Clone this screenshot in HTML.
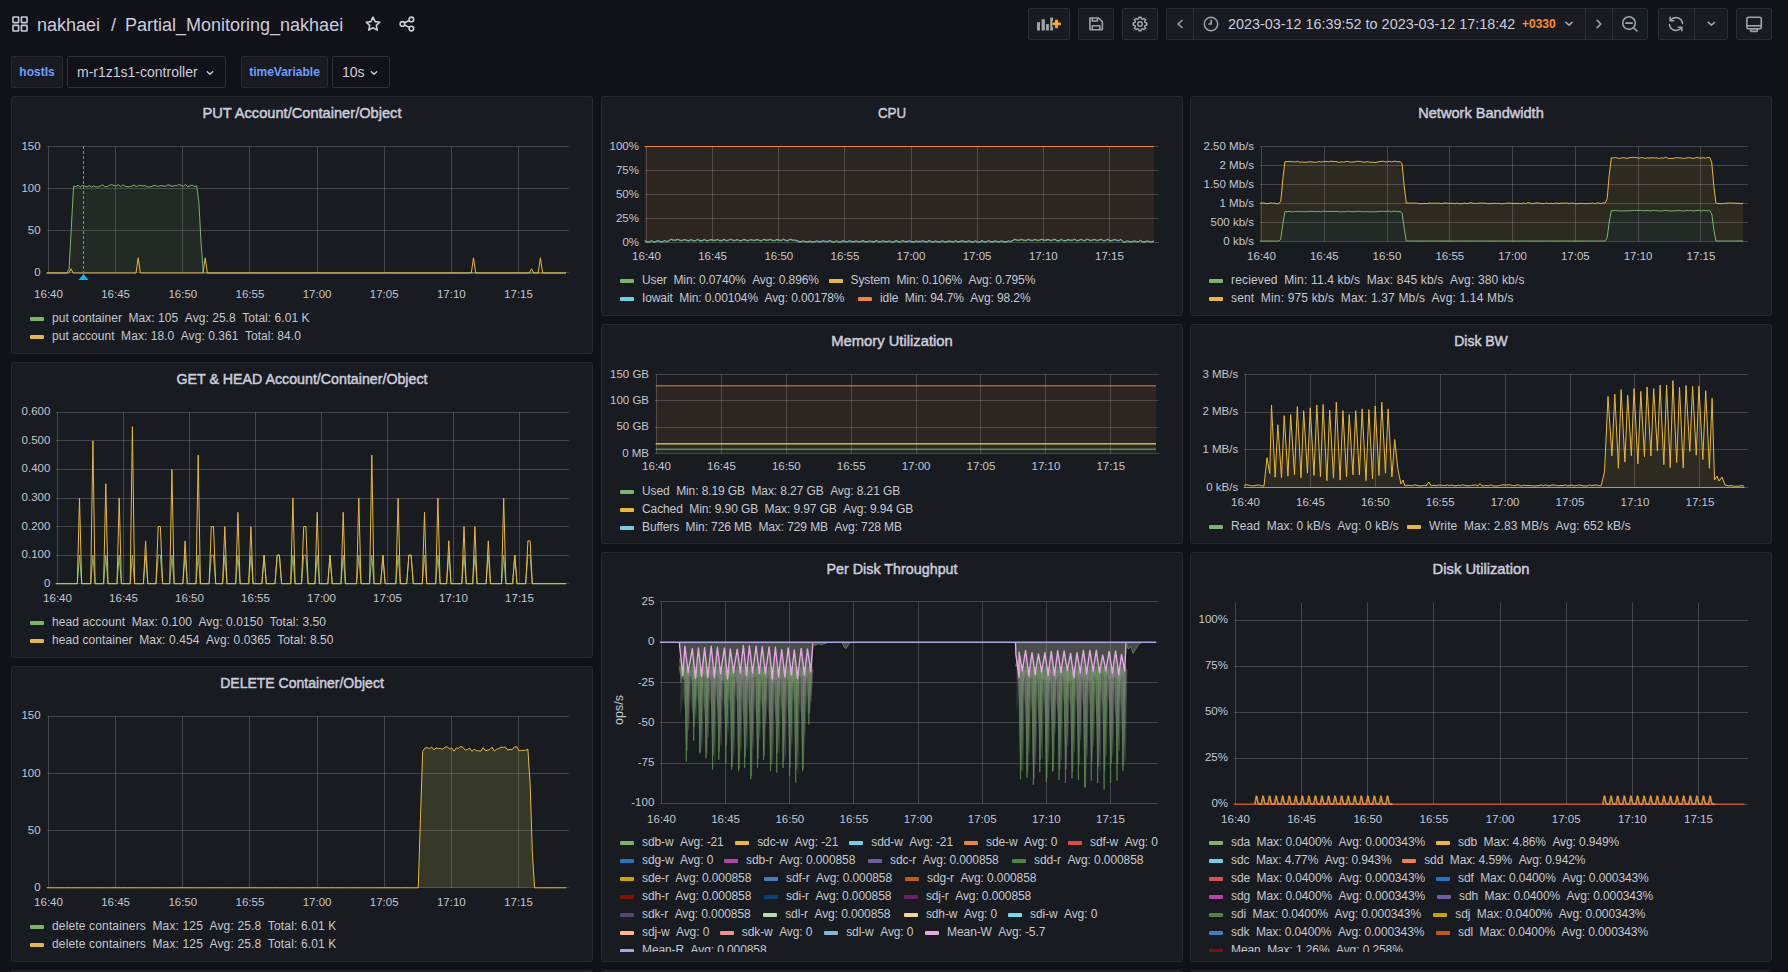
<!DOCTYPE html>
<html><head><meta charset="utf-8"><style>
*{box-sizing:border-box;margin:0;padding:0}
html,body{width:1788px;height:972px;overflow:hidden;background:#111217;font-family:"Liberation Sans",sans-serif;color:#ccccdc}
.panel{position:absolute;background:#181b1f;border:1px solid #26292e;border-radius:3px}
.clipfix{position:absolute;background:#181b1f}
.ptitle{position:absolute;text-align:center;font-size:15.4px;font-weight:400;-webkit-text-stroke:0.5px #ccccdc;line-height:18px;color:#ccccdc;white-space:nowrap}
.lrow{position:absolute;height:18px;line-height:18px;font-size:12px;white-space:nowrap;display:flex;align-items:center;color:#c7c8d0}
.li{display:inline-flex;align-items:center;margin-right:12px}
.li i{display:inline-block;width:14px;height:4px;border-radius:1px;margin-right:8px;position:relative;top:1px}
.lv{margin-right:6.5px}
.lv:last-child{margin-right:0}
.ic{position:absolute}
.crumb{position:absolute;font-size:18px;line-height:24px;color:#ccccdc;white-space:nowrap}
.btn{position:absolute;background:#181b1f;border:1px solid #2a2d33;border-radius:2px}
.btn svg{position:absolute;left:-1px;top:-1px}
.vdiv{position:absolute;width:1px;background:#2a2d33}
.ttxt{position:absolute;font-size:14.4px;line-height:32px;color:#ccccdc;white-space:nowrap}
.tz{position:absolute;font-size:12px;line-height:32px;color:#ff8c2e;font-weight:700;white-space:nowrap}
.vlab{position:absolute;height:32px;line-height:30px;background:#181b1f;border:1px solid #26292e;border-radius:2px;color:#6e9fff;font-size:12px;font-weight:700;text-align:center;white-space:nowrap}
.vsel{position:absolute;height:32px;line-height:30px;background:#111217;border:1px solid #2e3137;border-radius:2px;font-size:14px;white-space:nowrap}
svg.page{position:absolute;left:0;top:0}
.ax{font-family:"Liberation Sans",sans-serif;font-size:11.5px;fill:#c5c7cf}
</style></head><body>
<div class="panel" style="left:11px;top:96px;width:582px;height:258px"></div><div class="ptitle" style="left:11px;top:104px;width:582px;transform:scaleX(0.9506493506493506)">PUT Account/Container/Object</div><div class="lrow" style="left:30px;top:308.5px;letter-spacing:0.05px"><span class="li"><i style="background:#7EB26D"></i><span class="lv">put container</span><span class="lv">Max: 105</span><span class="lv">Avg: 25.8</span><span class="lv">Total: 6.01 K</span></span></div><div class="lrow" style="left:30px;top:326.5px;letter-spacing:0.05px"><span class="li"><i style="background:#EAB839"></i><span class="lv">put account</span><span class="lv">Max: 18.0</span><span class="lv">Avg: 0.361</span><span class="lv">Total: 84.0</span></span></div><div class="panel" style="left:11px;top:362px;width:582px;height:296px"></div><div class="ptitle" style="left:11px;top:370px;width:582px;transform:scaleX(0.9236363636363636)">GET &amp; HEAD Account/Container/Object</div><div class="lrow" style="left:30px;top:612.7px;letter-spacing:0.09px"><span class="li"><i style="background:#7EB26D"></i><span class="lv">head account</span><span class="lv">Max: 0.100</span><span class="lv">Avg: 0.0150</span><span class="lv">Total: 3.50</span></span></div><div class="lrow" style="left:30px;top:630.7px;letter-spacing:0.09px"><span class="li"><i style="background:#EAB839"></i><span class="lv">head container</span><span class="lv">Max: 0.454</span><span class="lv">Avg: 0.0365</span><span class="lv">Total: 8.50</span></span></div><div class="panel" style="left:11px;top:666px;width:582px;height:296px"></div><div class="ptitle" style="left:11px;top:674px;width:582px;transform:scaleX(0.9111688311688312)">DELETE Container/Object</div><div class="lrow" style="left:30px;top:917.0px;letter-spacing:0.15px"><span class="li"><i style="background:#7EB26D"></i><span class="lv">delete containers</span><span class="lv">Max: 125</span><span class="lv">Avg: 25.8</span><span class="lv">Total: 6.01 K</span></span></div><div class="lrow" style="left:30px;top:935.0px;letter-spacing:0.15px"><span class="li"><i style="background:#EAB839"></i><span class="lv">delete containers</span><span class="lv">Max: 125</span><span class="lv">Avg: 25.8</span><span class="lv">Total: 6.01 K</span></span></div><div class="panel" style="left:601px;top:96px;width:582px;height:220px"></div><div class="ptitle" style="left:601px;top:104px;width:582px;transform:scaleX(0.8675324675324675)">CPU</div><div class="lrow" style="left:620px;top:270.7px;letter-spacing:-0.1px"><span class="li"><i style="background:#7EB26D"></i><span class="lv">User</span><span class="lv">Min: 0.0740%</span><span class="lv">Avg: 0.896%</span></span></div><div class="lrow" style="left:828.5px;top:270.7px;letter-spacing:-0.1px"><span class="li"><i style="background:#EAB839"></i><span class="lv">System</span><span class="lv">Min: 0.106%</span><span class="lv">Avg: 0.795%</span></span></div><div class="lrow" style="left:620px;top:288.7px;letter-spacing:-0.1px"><span class="li"><i style="background:#6ED0E0"></i><span class="lv">Iowait</span><span class="lv">Min: 0.00104%</span><span class="lv">Avg: 0.00178%</span></span></div><div class="lrow" style="left:858px;top:288.7px;letter-spacing:-0.1px"><span class="li"><i style="background:#EF843C"></i><span class="lv">idle</span><span class="lv">Min: 94.7%</span><span class="lv">Avg: 98.2%</span></span></div><div class="panel" style="left:601px;top:324px;width:582px;height:220px"></div><div class="ptitle" style="left:601px;top:332px;width:582px;transform:scaleX(0.9600000000000001)">Memory Utilization</div><div class="lrow" style="left:620px;top:482.4px;letter-spacing:-0.1px"><span class="li"><i style="background:#7EB26D"></i><span class="lv">Used</span><span class="lv">Min: 8.19 GB</span><span class="lv">Max: 8.27 GB</span><span class="lv">Avg: 8.21 GB</span></span></div><div class="lrow" style="left:620px;top:500.4px;letter-spacing:-0.1px"><span class="li"><i style="background:#EAB839"></i><span class="lv">Cached</span><span class="lv">Min: 9.90 GB</span><span class="lv">Max: 9.97 GB</span><span class="lv">Avg: 9.94 GB</span></span></div><div class="lrow" style="left:620px;top:518.4px;letter-spacing:-0.1px"><span class="li"><i style="background:#6ED0E0"></i><span class="lv">Buffers</span><span class="lv">Min: 726 MB</span><span class="lv">Max: 729 MB</span><span class="lv">Avg: 728 MB</span></span></div><div class="panel" style="left:1190px;top:96px;width:582px;height:220px"></div><div class="ptitle" style="left:1190px;top:104px;width:582px;transform:scaleX(0.9464935064935065)">Network Bandwidth</div><div class="lrow" style="left:1209px;top:270.7px;letter-spacing:0.16px"><span class="li"><i style="background:#7EB26D"></i><span class="lv">recieved</span><span class="lv">Min: 11.4 kb/s</span><span class="lv">Max: 845 kb/s</span><span class="lv">Avg: 380 kb/s</span></span></div><div class="lrow" style="left:1209px;top:288.7px;letter-spacing:0.16px"><span class="li"><i style="background:#EAB839"></i><span class="lv">sent</span><span class="lv">Min: 975 kb/s</span><span class="lv">Max: 1.37 Mb/s</span><span class="lv">Avg: 1.14 Mb/s</span></span></div><div class="panel" style="left:1190px;top:324px;width:582px;height:220px"></div><div class="ptitle" style="left:1190px;top:332px;width:582px;transform:scaleX(0.9101298701298701)">Disk BW</div><div class="lrow" style="left:1209px;top:516.7px;letter-spacing:0.12px"><span class="li"><i style="background:#7EB26D"></i><span class="lv">Read</span><span class="lv">Max: 0 kB/s</span><span class="lv">Avg: 0 kB/s</span></span></div><div class="lrow" style="left:1407px;top:516.7px;letter-spacing:0.12px"><span class="li"><i style="background:#EAB839"></i><span class="lv">Write</span><span class="lv">Max: 2.83 MB/s</span><span class="lv">Avg: 652 kB/s</span></span></div><div class="panel" style="left:601px;top:552px;width:582px;height:410px"></div><div class="ptitle" style="left:601px;top:560px;width:582px;transform:scaleX(0.9309090909090909)">Per Disk Throughput</div><div class="lrow" style="left:620px;top:832.7px;letter-spacing:-0.1px"><span class="li"><i style="background:#7EB26D"></i><span class="lv">sdb-w</span><span class="lv">Avg: -21</span></span></div><div class="lrow" style="left:735.2px;top:832.7px;letter-spacing:-0.1px"><span class="li"><i style="background:#EAB839"></i><span class="lv">sdc-w</span><span class="lv">Avg: -21</span></span></div><div class="lrow" style="left:849.3px;top:832.7px;letter-spacing:-0.1px"><span class="li"><i style="background:#6ED0E0"></i><span class="lv">sdd-w</span><span class="lv">Avg: -21</span></span></div><div class="lrow" style="left:964px;top:832.7px;letter-spacing:-0.1px"><span class="li"><i style="background:#EF843C"></i><span class="lv">sde-w</span><span class="lv">Avg: 0</span></span></div><div class="lrow" style="left:1068px;top:832.7px;letter-spacing:-0.1px"><span class="li"><i style="background:#E24D42"></i><span class="lv">sdf-w</span><span class="lv">Avg: 0</span></span></div><div class="lrow" style="left:620px;top:850.7px;letter-spacing:-0.1px"><span class="li"><i style="background:#1F78C1"></i><span class="lv">sdg-w</span><span class="lv">Avg: 0</span></span></div><div class="lrow" style="left:724px;top:850.7px;letter-spacing:-0.1px"><span class="li"><i style="background:#BA43A9"></i><span class="lv">sdb-r</span><span class="lv">Avg: 0.000858</span></span></div><div class="lrow" style="left:868.1px;top:850.7px;letter-spacing:-0.1px"><span class="li"><i style="background:#705DA0"></i><span class="lv">sdc-r</span><span class="lv">Avg: 0.000858</span></span></div><div class="lrow" style="left:1012.1px;top:850.7px;letter-spacing:-0.1px"><span class="li"><i style="background:#508642"></i><span class="lv">sdd-r</span><span class="lv">Avg: 0.000858</span></span></div><div class="lrow" style="left:620px;top:868.7px;letter-spacing:-0.1px"><span class="li"><i style="background:#CCA300"></i><span class="lv">sde-r</span><span class="lv">Avg: 0.000858</span></span></div><div class="lrow" style="left:764.1px;top:868.7px;letter-spacing:-0.1px"><span class="li"><i style="background:#447EBC"></i><span class="lv">sdf-r</span><span class="lv">Avg: 0.000858</span></span></div><div class="lrow" style="left:905.1px;top:868.7px;letter-spacing:-0.1px"><span class="li"><i style="background:#C15C17"></i><span class="lv">sdg-r</span><span class="lv">Avg: 0.000858</span></span></div><div class="lrow" style="left:620px;top:886.7px;letter-spacing:-0.1px"><span class="li"><i style="background:#890F02"></i><span class="lv">sdh-r</span><span class="lv">Avg: 0.000858</span></span></div><div class="lrow" style="left:764.1px;top:886.7px;letter-spacing:-0.1px"><span class="li"><i style="background:#0A437C"></i><span class="lv">sdi-r</span><span class="lv">Avg: 0.000858</span></span></div><div class="lrow" style="left:903.9px;top:886.7px;letter-spacing:-0.1px"><span class="li"><i style="background:#6D1F62"></i><span class="lv">sdj-r</span><span class="lv">Avg: 0.000858</span></span></div><div class="lrow" style="left:620px;top:904.7px;letter-spacing:-0.1px"><span class="li"><i style="background:#584477"></i><span class="lv">sdk-r</span><span class="lv">Avg: 0.000858</span></span></div><div class="lrow" style="left:763.2px;top:904.7px;letter-spacing:-0.1px"><span class="li"><i style="background:#B7DBAB"></i><span class="lv">sdl-r</span><span class="lv">Avg: 0.000858</span></span></div><div class="lrow" style="left:903.9px;top:904.7px;letter-spacing:-0.1px"><span class="li"><i style="background:#F4D598"></i><span class="lv">sdh-w</span><span class="lv">Avg: 0</span></span></div><div class="lrow" style="left:1008px;top:904.7px;letter-spacing:-0.1px"><span class="li"><i style="background:#70DBED"></i><span class="lv">sdi-w</span><span class="lv">Avg: 0</span></span></div><div class="lrow" style="left:620px;top:922.7px;letter-spacing:-0.1px"><span class="li"><i style="background:#F9BA8F"></i><span class="lv">sdj-w</span><span class="lv">Avg: 0</span></span></div><div class="lrow" style="left:719.8px;top:922.7px;letter-spacing:-0.1px"><span class="li"><i style="background:#F29191"></i><span class="lv">sdk-w</span><span class="lv">Avg: 0</span></span></div><div class="lrow" style="left:824.2px;top:922.7px;letter-spacing:-0.1px"><span class="li"><i style="background:#82B5D8"></i><span class="lv">sdl-w</span><span class="lv">Avg: 0</span></span></div><div class="lrow" style="left:925.1px;top:922.7px;letter-spacing:-0.1px"><span class="li"><i style="background:#E5A8E2"></i><span class="lv">Mean-W</span><span class="lv">Avg: -5.7</span></span></div><div class="lrow" style="left:620px;top:940.7px;letter-spacing:-0.1px"><span class="li"><i style="background:#AEA2E0"></i><span class="lv">Mean-R</span><span class="lv">Avg: 0.000858</span></span></div><div class="panel" style="left:1190px;top:552px;width:582px;height:410px"></div><div class="ptitle" style="left:1190px;top:560px;width:582px;transform:scaleX(0.958961038961039)">Disk Utilization</div><div class="lrow" style="left:1209px;top:832.7px;letter-spacing:-0.1px"><span class="li"><i style="background:#7EB26D"></i><span class="lv">sda</span><span class="lv">Max: 0.0400%</span><span class="lv">Avg: 0.000343%</span></span></div><div class="lrow" style="left:1436px;top:832.7px;letter-spacing:-0.1px"><span class="li"><i style="background:#EAB839"></i><span class="lv">sdb</span><span class="lv">Max: 4.86%</span><span class="lv">Avg: 0.949%</span></span></div><div class="lrow" style="left:1209px;top:850.7px;letter-spacing:-0.1px"><span class="li"><i style="background:#6ED0E0"></i><span class="lv">sdc</span><span class="lv">Max: 4.77%</span><span class="lv">Avg: 0.943%</span></span></div><div class="lrow" style="left:1402.2px;top:850.7px;letter-spacing:-0.1px"><span class="li"><i style="background:#EF843C"></i><span class="lv">sdd</span><span class="lv">Max: 4.59%</span><span class="lv">Avg: 0.942%</span></span></div><div class="lrow" style="left:1209px;top:868.7px;letter-spacing:-0.1px"><span class="li"><i style="background:#E24D42"></i><span class="lv">sde</span><span class="lv">Max: 0.0400%</span><span class="lv">Avg: 0.000343%</span></span></div><div class="lrow" style="left:1436px;top:868.7px;letter-spacing:-0.1px"><span class="li"><i style="background:#1F78C1"></i><span class="lv">sdf</span><span class="lv">Max: 0.0400%</span><span class="lv">Avg: 0.000343%</span></span></div><div class="lrow" style="left:1209px;top:886.7px;letter-spacing:-0.1px"><span class="li"><i style="background:#BA43A9"></i><span class="lv">sdg</span><span class="lv">Max: 0.0400%</span><span class="lv">Avg: 0.000343%</span></span></div><div class="lrow" style="left:1437px;top:886.7px;letter-spacing:-0.1px"><span class="li"><i style="background:#705DA0"></i><span class="lv">sdh</span><span class="lv">Max: 0.0400%</span><span class="lv">Avg: 0.000343%</span></span></div><div class="lrow" style="left:1209px;top:904.7px;letter-spacing:-0.1px"><span class="li"><i style="background:#508642"></i><span class="lv">sdi</span><span class="lv">Max: 0.0400%</span><span class="lv">Avg: 0.000343%</span></span></div><div class="lrow" style="left:1433.3px;top:904.7px;letter-spacing:-0.1px"><span class="li"><i style="background:#CCA300"></i><span class="lv">sdj</span><span class="lv">Max: 0.0400%</span><span class="lv">Avg: 0.000343%</span></span></div><div class="lrow" style="left:1209px;top:922.7px;letter-spacing:-0.1px"><span class="li"><i style="background:#447EBC"></i><span class="lv">sdk</span><span class="lv">Max: 0.0400%</span><span class="lv">Avg: 0.000343%</span></span></div><div class="lrow" style="left:1436px;top:922.7px;letter-spacing:-0.1px"><span class="li"><i style="background:#C15C17"></i><span class="lv">sdl</span><span class="lv">Max: 0.0400%</span><span class="lv">Avg: 0.000343%</span></span></div><div class="lrow" style="left:1209px;top:940.7px;letter-spacing:-0.1px"><span class="li"><i style="background:#890F02"></i><span class="lv">Mean</span><span class="lv">Max: 1.26%</span><span class="lv">Avg: 0.258%</span></span></div><div class="clipfix" style="left:602px;top:952px;width:580px;height:9px"></div><div class="clipfix" style="left:1191px;top:952px;width:580px;height:9px"></div><div class="panel" style="left:11px;top:970px;width:582px;height:20px"></div><div class="panel" style="left:601px;top:970px;width:582px;height:20px"></div><div class="panel" style="left:1190px;top:970px;width:582px;height:20px"></div>
<svg class="ic" style="left:12px;top:16px" width="16" height="16" viewBox="0 0 16 16" fill="none" stroke="#ccccdc" stroke-width="1.6">
<rect x="1" y="1" width="5.6" height="5.6" rx="0.6"/><rect x="9.4" y="1" width="5.6" height="5.6" rx="0.6"/>
<rect x="1" y="9.4" width="5.6" height="5.6" rx="0.6"/><rect x="9.4" y="9.4" width="5.6" height="5.6" rx="0.6"/></svg>
<div class="crumb" style="left:37px;top:12.7px">nakhaei</div>
<div class="crumb" style="left:111px;top:12.7px">/</div>
<div class="crumb" style="left:125px;top:12.7px">Partial_Monitoring_nakhaei</div>
<svg class="ic" style="left:364px;top:15px" width="18" height="18" viewBox="0 0 18 18" fill="none" stroke="#ccccdc" stroke-width="1.6" stroke-linejoin="round">
<path d="M9 2.2 L11.1 6.6 L15.8 7.2 L12.3 10.4 L13.2 15.1 L9 12.8 L4.8 15.1 L5.7 10.4 L2.2 7.2 L6.9 6.6 Z"/></svg>
<svg class="ic" style="left:397px;top:15px" width="20" height="18" viewBox="0 0 20 18" fill="none" stroke="#ccccdc" stroke-width="1.6">
<circle cx="5.4" cy="8.9" r="2.3"/><circle cx="14.4" cy="4.4" r="2.3"/><circle cx="14.4" cy="13.6" r="2.3"/>
<path d="M7.6 7.8 L12.2 5.5 M7.6 10 L12.2 12.4"/></svg>
<div class="btn" style="left:1028px;top:8px;width:42px;height:32px;"><svg width="42" height="32" viewBox="0 0 42 32"><g fill="#9fa3ab">
<rect x="9" y="14.2" width="3" height="8.3"/><rect x="13.6" y="11.3" width="3.3" height="11.2"/><rect x="18" y="16.1" width="2.9" height="6.4"/><rect x="22.2" y="9.5" width="2.9" height="13"/></g>
<defs><linearGradient id="og" x1="0" y1="0" x2="0" y2="1"><stop offset="0" stop-color="#ffb92e"/><stop offset="1" stop-color="#ff9a1a"/></linearGradient></defs>
<path d="M24 15.9 H33 M28.5 11.6 V20.4" stroke="#1c1f24" stroke-width="5.2"/><path d="M24.2 15.9 H32.8 M28.5 11.8 V20.2" stroke="url(#og)" stroke-width="2.8"/></svg></div><div class="btn" style="left:1078px;top:8px;width:36px;height:32px;"><svg width="36" height="32" viewBox="0 0 36 32" fill="none" stroke="#9fa3ab" stroke-width="1.6" stroke-linejoin="round">
<path d="M11.9 10 H20.6 L24.4 13.8 V20.9 Q24.4 21.8 23.5 21.8 H12.8 Q11.9 21.8 11.9 20.9 Z"/><path d="M14.3 10 V13 H19.4 V10"/><path d="M14.3 21.8 V17.8 H21.8 V21.8"/></svg></div><div class="btn" style="left:1122px;top:8px;width:36px;height:32px;"><svg width="36" height="32" viewBox="0 0 36 32" fill="none" stroke="#9fa3ab" stroke-width="1.5" stroke-linejoin="round">
<polygon points="23.11,14.59 24.70,14.85 24.70,17.15 23.11,17.41 22.61,18.61 23.55,19.93 21.93,21.55 20.61,20.61 19.41,21.11 19.15,22.70 16.85,22.70 16.59,21.11 15.39,20.61 14.07,21.55 12.45,19.93 13.39,18.61 12.89,17.41 11.30,17.15 11.30,14.85 12.89,14.59 13.39,13.39 12.45,12.07 14.07,10.45 15.39,11.39 16.59,10.89 16.85,9.30 19.15,9.30 19.41,10.89 20.61,11.39 21.93,10.45 23.55,12.07 22.61,13.39"/><circle cx="18" cy="16" r="2.3"/></svg></div><div class="btn" style="left:1166px;top:8px;width:482px;height:32px"></div><div class="vdiv" style="left:1193px;top:9px;height:30px"></div><div class="vdiv" style="left:1585px;top:9px;height:30px"></div><div class="vdiv" style="left:1612px;top:9px;height:30px"></div><svg class="ic" style="left:1166px;top:8px" width="27" height="32" viewBox="0 0 27 32" fill="none" stroke="#9fa3ab" stroke-width="1.6" stroke-linecap="round" stroke-linejoin="round"><path d="M16 12.5 L12 16 L16 19.5"/></svg><svg class="ic" style="left:1200px;top:8px" width="22" height="32" viewBox="0 0 22 32" fill="none" stroke="#9fa3ab" stroke-width="1.5"><circle cx="11" cy="16" r="6.7"/><path d="M11.2 11.8 V16 H8.3" stroke-width="1.7"/></svg><div class="ttxt" style="left:1228px;top:8px">2023-03-12 16:39:52 to 2023-03-12 17:18:42</div><div class="tz" style="left:1522px;top:8px">+0330</div><svg class="ic" style="left:1560px;top:8px" width="18" height="32" viewBox="0 0 18 32" fill="none" stroke="#9fa3ab" stroke-width="1.6" stroke-linecap="round" stroke-linejoin="round"><path d="M5.9 14.4 L9 17.2 L12.1 14.4"/></svg><svg class="ic" style="left:1586px;top:8px" width="26" height="32" viewBox="0 0 26 32" fill="none" stroke="#9fa3ab" stroke-width="1.6" stroke-linecap="round" stroke-linejoin="round"><path d="M11.2 12.4 L14.8 16 L11.2 19.6"/></svg><svg class="ic" style="left:1613px;top:8px" width="34" height="32" viewBox="0 0 34 32" fill="none" stroke="#9fa3ab" stroke-width="1.6" stroke-linecap="round"><circle cx="16" cy="15.1" r="6.3"/><path d="M12.8 15.1 H19.2 M20.6 19.8 L24 23"/></svg><div class="btn" style="left:1658px;top:8px;width:70px;height:32px"></div><div class="vdiv" style="left:1694px;top:9px;height:30px"></div><svg class="ic" style="left:1658px;top:8px" width="36" height="32" viewBox="0 0 36 32" fill="none" stroke="#9fa3ab" stroke-width="1.6" stroke-linecap="round" stroke-linejoin="round">
<path d="M11.4 16.6 A6.8 6.8 0 0 0 23.6 19.6"/><path d="M24.6 15.4 A6.8 6.8 0 0 0 12.4 12.4"/><path d="M12.2 9.2 V12.8 H15.8" /><path d="M23.8 22.8 V19.2 H20.2"/></svg><svg class="ic" style="left:1695px;top:8px" width="33" height="32" viewBox="0 0 33 32" fill="none" stroke="#9fa3ab" stroke-width="1.6" stroke-linecap="round" stroke-linejoin="round"><path d="M13.3 14.3 L16.4 17.1 L19.5 14.3"/></svg><div class="btn" style="left:1736px;top:8px;width:36px;height:32px;"><svg width="36" height="32" viewBox="0 0 36 32" fill="none" stroke="#9fa3ab" stroke-width="1.6" stroke-linejoin="round">
<rect x="10.9" y="9.2" width="14.4" height="11.6" rx="1.6"/><path d="M10.9 17.8 H25.3"/><rect x="14.6" y="20.8" width="6.8" height="2.6" rx="0.8"/></svg></div><div class="vlab" style="left:11px;top:56px;width:52px">hostIs</div><div class="vsel" style="left:67px;top:56px;width:159px"><span style="margin-left:9px">m-r1z1s1-controller</span><svg style="position:absolute;left:137px;top:11px" width="10" height="10" viewBox="0 0 10 10" fill="none" stroke="#ccccdc" stroke-width="1.5" stroke-linecap="round" stroke-linejoin="round"><path d="M2.3 3.8 L5 6.3 L7.7 3.8"/></svg></div><div class="vlab" style="left:241px;top:56px;width:87px">timeVariable</div><div class="vsel" style="left:332px;top:56px;width:58px"><span style="margin-left:9px">10s</span><svg style="position:absolute;left:36px;top:11px" width="10" height="10" viewBox="0 0 10 10" fill="none" stroke="#ccccdc" stroke-width="1.5" stroke-linecap="round" stroke-linejoin="round"><path d="M2.3 3.8 L5 6.3 L7.7 3.8"/></svg></div>
<svg class="page" width="1788" height="972" viewBox="0 0 1788 972"><line x1="47.0" y1="272.5" x2="568.7" y2="272.5" stroke="rgba(204,206,220,0.245)" stroke-width="1"/><text x="40.6" y="276.0" class="ax" text-anchor="end">0</text><line x1="47.0" y1="230.5" x2="568.7" y2="230.5" stroke="rgba(204,206,220,0.245)" stroke-width="1"/><text x="40.6" y="233.8" class="ax" text-anchor="end">50</text><line x1="47.0" y1="188.5" x2="568.7" y2="188.5" stroke="rgba(204,206,220,0.245)" stroke-width="1"/><text x="40.6" y="191.7" class="ax" text-anchor="end">100</text><line x1="47.0" y1="146.5" x2="568.7" y2="146.5" stroke="rgba(204,206,220,0.245)" stroke-width="1"/><text x="40.6" y="149.5" class="ax" text-anchor="end">150</text><line x1="48.5" y1="146.5" x2="48.5" y2="273.0" stroke="rgba(204,206,220,0.245)" stroke-width="1"/><text x="48.5" y="297.8" class="ax" text-anchor="middle">16:40</text><line x1="115.5" y1="146.5" x2="115.5" y2="273.0" stroke="rgba(204,206,220,0.245)" stroke-width="1"/><text x="115.6" y="297.8" class="ax" text-anchor="middle">16:45</text><line x1="182.5" y1="146.5" x2="182.5" y2="273.0" stroke="rgba(204,206,220,0.245)" stroke-width="1"/><text x="182.8" y="297.8" class="ax" text-anchor="middle">16:50</text><line x1="249.5" y1="146.5" x2="249.5" y2="273.0" stroke="rgba(204,206,220,0.245)" stroke-width="1"/><text x="249.9" y="297.8" class="ax" text-anchor="middle">16:55</text><line x1="317.5" y1="146.5" x2="317.5" y2="273.0" stroke="rgba(204,206,220,0.245)" stroke-width="1"/><text x="317.1" y="297.8" class="ax" text-anchor="middle">17:00</text><line x1="384.5" y1="146.5" x2="384.5" y2="273.0" stroke="rgba(204,206,220,0.245)" stroke-width="1"/><text x="384.2" y="297.8" class="ax" text-anchor="middle">17:05</text><line x1="451.5" y1="146.5" x2="451.5" y2="273.0" stroke="rgba(204,206,220,0.245)" stroke-width="1"/><text x="451.3" y="297.8" class="ax" text-anchor="middle">17:10</text><line x1="518.5" y1="146.5" x2="518.5" y2="273.0" stroke="rgba(204,206,220,0.245)" stroke-width="1"/><text x="518.5" y="297.8" class="ax" text-anchor="middle">17:15</text><polygon points="46.71,273.00 48.95,273.00 51.19,273.00 53.42,273.00 55.66,273.00 57.90,273.00 60.14,273.00 62.38,273.00 64.61,273.00 66.85,273.00 69.09,268.84 71.33,227.28 73.57,186.19 75.80,186.66 78.04,185.31 80.28,186.87 82.52,185.62 84.76,186.08 86.99,186.91 89.23,185.69 91.47,186.96 93.71,185.89 95.95,186.88 98.18,186.82 100.42,185.92 102.66,184.83 104.90,186.73 107.14,186.46 109.37,185.37 111.61,184.51 113.85,185.51 116.09,185.99 118.33,184.43 120.56,186.94 122.80,184.75 125.04,186.28 127.28,186.68 129.52,186.75 131.75,186.23 133.99,184.86 136.23,186.58 138.47,185.49 140.71,185.34 142.94,186.06 145.18,185.59 147.42,186.89 149.66,186.90 151.90,186.51 154.13,185.23 156.37,185.91 158.61,186.22 160.85,185.48 163.09,185.84 165.32,186.26 167.56,184.92 169.80,185.18 172.04,186.41 174.28,185.51 176.51,185.65 178.75,184.70 180.99,185.10 183.23,186.29 185.47,184.42 187.70,186.75 189.94,185.94 192.18,185.02 194.42,186.65 196.66,185.74 198.89,202.34 201.13,243.91 203.37,273.00 205.61,273.00 207.85,273.00 210.08,273.00 212.32,273.00 214.56,273.00 216.80,273.00 219.04,273.00 221.27,273.00 223.51,273.00 225.75,273.00 227.99,273.00 230.23,273.00 232.46,273.00 234.70,273.00 236.94,273.00 239.18,273.00 241.42,273.00 243.65,273.00 245.89,273.00 248.13,273.00 250.37,273.00 252.61,273.00 254.84,273.00 257.08,273.00 259.32,273.00 261.56,273.00 263.80,273.00 266.03,273.00 268.27,273.00 270.51,273.00 272.75,273.00 274.99,273.00 277.22,273.00 279.46,273.00 281.70,273.00 283.94,273.00 286.18,273.00 288.41,273.00 290.65,273.00 292.89,273.00 295.13,273.00 297.37,273.00 299.60,273.00 301.84,273.00 304.08,273.00 306.32,273.00 308.56,273.00 310.79,273.00 313.03,273.00 315.27,273.00 317.51,273.00 319.75,273.00 321.98,273.00 324.22,273.00 326.46,273.00 328.70,273.00 330.94,273.00 333.17,273.00 335.41,273.00 337.65,273.00 339.89,273.00 342.13,273.00 344.36,273.00 346.60,273.00 348.84,273.00 351.08,273.00 353.32,273.00 355.55,273.00 357.79,273.00 360.03,273.00 362.27,273.00 364.51,273.00 366.74,273.00 368.98,273.00 371.22,273.00 373.46,273.00 375.70,273.00 377.93,273.00 380.17,273.00 382.41,273.00 384.65,273.00 386.89,273.00 389.12,273.00 391.36,273.00 393.60,273.00 395.84,273.00 398.08,273.00 400.31,273.00 402.55,273.00 404.79,273.00 407.03,273.00 409.27,273.00 411.50,273.00 413.74,273.00 415.98,273.00 418.22,273.00 420.46,273.00 422.69,273.00 424.93,273.00 427.17,273.00 429.41,273.00 431.65,273.00 433.88,273.00 436.12,273.00 438.36,273.00 440.60,273.00 442.84,273.00 445.07,273.00 447.31,273.00 449.55,273.00 451.79,273.00 454.03,273.00 456.26,273.00 458.50,273.00 460.74,273.00 462.98,273.00 465.22,273.00 467.45,273.00 469.69,273.00 471.93,273.00 474.17,273.00 476.41,273.00 478.64,273.00 480.88,273.00 483.12,273.00 485.36,273.00 487.60,273.00 489.83,273.00 492.07,273.00 494.31,273.00 496.55,273.00 498.79,273.00 501.02,273.00 503.26,273.00 505.50,273.00 507.74,273.00 509.98,273.00 512.21,273.00 514.45,273.00 516.69,273.00 518.93,273.00 521.17,273.00 523.40,273.00 525.64,273.00 527.88,273.00 530.12,273.00 532.36,273.00 534.59,273.00 536.83,273.00 539.07,273.00 541.31,273.00 543.55,273.00 545.78,273.00 548.02,273.00 550.26,273.00 552.50,273.00 554.74,273.00 556.97,273.00 559.21,273.00 561.45,273.00 563.69,273.00 565.93,273.00 565.93,273.00 46.71,273.00" fill="#7EB26D" fill-opacity="0.1" stroke="none"/><polyline points="46.71,273.00 48.95,273.00 51.19,273.00 53.42,273.00 55.66,273.00 57.90,273.00 60.14,273.00 62.38,273.00 64.61,273.00 66.85,273.00 69.09,268.84 71.33,227.28 73.57,186.19 75.80,186.66 78.04,185.31 80.28,186.87 82.52,185.62 84.76,186.08 86.99,186.91 89.23,185.69 91.47,186.96 93.71,185.89 95.95,186.88 98.18,186.82 100.42,185.92 102.66,184.83 104.90,186.73 107.14,186.46 109.37,185.37 111.61,184.51 113.85,185.51 116.09,185.99 118.33,184.43 120.56,186.94 122.80,184.75 125.04,186.28 127.28,186.68 129.52,186.75 131.75,186.23 133.99,184.86 136.23,186.58 138.47,185.49 140.71,185.34 142.94,186.06 145.18,185.59 147.42,186.89 149.66,186.90 151.90,186.51 154.13,185.23 156.37,185.91 158.61,186.22 160.85,185.48 163.09,185.84 165.32,186.26 167.56,184.92 169.80,185.18 172.04,186.41 174.28,185.51 176.51,185.65 178.75,184.70 180.99,185.10 183.23,186.29 185.47,184.42 187.70,186.75 189.94,185.94 192.18,185.02 194.42,186.65 196.66,185.74 198.89,202.34 201.13,243.91 203.37,273.00 205.61,273.00 207.85,273.00 210.08,273.00 212.32,273.00 214.56,273.00 216.80,273.00 219.04,273.00 221.27,273.00 223.51,273.00 225.75,273.00 227.99,273.00 230.23,273.00 232.46,273.00 234.70,273.00 236.94,273.00 239.18,273.00 241.42,273.00 243.65,273.00 245.89,273.00 248.13,273.00 250.37,273.00 252.61,273.00 254.84,273.00 257.08,273.00 259.32,273.00 261.56,273.00 263.80,273.00 266.03,273.00 268.27,273.00 270.51,273.00 272.75,273.00 274.99,273.00 277.22,273.00 279.46,273.00 281.70,273.00 283.94,273.00 286.18,273.00 288.41,273.00 290.65,273.00 292.89,273.00 295.13,273.00 297.37,273.00 299.60,273.00 301.84,273.00 304.08,273.00 306.32,273.00 308.56,273.00 310.79,273.00 313.03,273.00 315.27,273.00 317.51,273.00 319.75,273.00 321.98,273.00 324.22,273.00 326.46,273.00 328.70,273.00 330.94,273.00 333.17,273.00 335.41,273.00 337.65,273.00 339.89,273.00 342.13,273.00 344.36,273.00 346.60,273.00 348.84,273.00 351.08,273.00 353.32,273.00 355.55,273.00 357.79,273.00 360.03,273.00 362.27,273.00 364.51,273.00 366.74,273.00 368.98,273.00 371.22,273.00 373.46,273.00 375.70,273.00 377.93,273.00 380.17,273.00 382.41,273.00 384.65,273.00 386.89,273.00 389.12,273.00 391.36,273.00 393.60,273.00 395.84,273.00 398.08,273.00 400.31,273.00 402.55,273.00 404.79,273.00 407.03,273.00 409.27,273.00 411.50,273.00 413.74,273.00 415.98,273.00 418.22,273.00 420.46,273.00 422.69,273.00 424.93,273.00 427.17,273.00 429.41,273.00 431.65,273.00 433.88,273.00 436.12,273.00 438.36,273.00 440.60,273.00 442.84,273.00 445.07,273.00 447.31,273.00 449.55,273.00 451.79,273.00 454.03,273.00 456.26,273.00 458.50,273.00 460.74,273.00 462.98,273.00 465.22,273.00 467.45,273.00 469.69,273.00 471.93,273.00 474.17,273.00 476.41,273.00 478.64,273.00 480.88,273.00 483.12,273.00 485.36,273.00 487.60,273.00 489.83,273.00 492.07,273.00 494.31,273.00 496.55,273.00 498.79,273.00 501.02,273.00 503.26,273.00 505.50,273.00 507.74,273.00 509.98,273.00 512.21,273.00 514.45,273.00 516.69,273.00 518.93,273.00 521.17,273.00 523.40,273.00 525.64,273.00 527.88,273.00 530.12,273.00 532.36,273.00 534.59,273.00 536.83,273.00 539.07,273.00 541.31,273.00 543.55,273.00 545.78,273.00 548.02,273.00 550.26,273.00 552.50,273.00 554.74,273.00 556.97,273.00 559.21,273.00 561.45,273.00 563.69,273.00 565.93,273.00" fill="none" stroke="#7EB26D" stroke-width="1" stroke-opacity="1" stroke-linejoin="round"/><polyline points="46.71,273.00 68.80,273.00 71.00,268.78 73.20,273.00 136.00,273.00 138.20,257.82 140.40,273.00 203.00,273.00 205.20,257.82 207.40,273.00 471.30,273.00 473.50,257.82 475.70,273.00 529.30,273.00 531.50,268.78 533.70,273.00 538.20,273.00 540.40,257.82 542.60,273.00 566.00,273.00" fill="none" stroke="#EAB839" stroke-width="1" stroke-opacity="1" stroke-linejoin="round"/><line x1="83.5" y1="146" x2="83.5" y2="274" stroke="#14b8e6" stroke-width="1" stroke-dasharray="3,2"/><polygon points="78.5,280 83.5,274 88.5,280" fill="#14b8e6"/><line x1="56.0" y1="583.5" x2="568.8" y2="583.5" stroke="rgba(204,206,220,0.245)" stroke-width="1"/><text x="50.4" y="586.7" class="ax" text-anchor="end">0</text><line x1="56.0" y1="555.5" x2="568.8" y2="555.5" stroke="rgba(204,206,220,0.245)" stroke-width="1"/><text x="50.4" y="558.1" class="ax" text-anchor="end">0.100</text><line x1="56.0" y1="526.5" x2="568.8" y2="526.5" stroke="rgba(204,206,220,0.245)" stroke-width="1"/><text x="50.4" y="529.6" class="ax" text-anchor="end">0.200</text><line x1="56.0" y1="498.5" x2="568.8" y2="498.5" stroke="rgba(204,206,220,0.245)" stroke-width="1"/><text x="50.4" y="501.0" class="ax" text-anchor="end">0.300</text><line x1="56.0" y1="469.5" x2="568.8" y2="469.5" stroke="rgba(204,206,220,0.245)" stroke-width="1"/><text x="50.4" y="472.4" class="ax" text-anchor="end">0.400</text><line x1="56.0" y1="440.5" x2="568.8" y2="440.5" stroke="rgba(204,206,220,0.245)" stroke-width="1"/><text x="50.4" y="443.9" class="ax" text-anchor="end">0.500</text><line x1="56.0" y1="412.5" x2="568.8" y2="412.5" stroke="rgba(204,206,220,0.245)" stroke-width="1"/><text x="50.4" y="415.3" class="ax" text-anchor="end">0.600</text><line x1="57.5" y1="412.3" x2="57.5" y2="583.7" stroke="rgba(204,206,220,0.245)" stroke-width="1"/><text x="57.5" y="601.8" class="ax" text-anchor="middle">16:40</text><line x1="123.5" y1="412.3" x2="123.5" y2="583.7" stroke="rgba(204,206,220,0.245)" stroke-width="1"/><text x="123.5" y="601.8" class="ax" text-anchor="middle">16:45</text><line x1="189.5" y1="412.3" x2="189.5" y2="583.7" stroke="rgba(204,206,220,0.245)" stroke-width="1"/><text x="189.5" y="601.8" class="ax" text-anchor="middle">16:50</text><line x1="255.5" y1="412.3" x2="255.5" y2="583.7" stroke="rgba(204,206,220,0.245)" stroke-width="1"/><text x="255.5" y="601.8" class="ax" text-anchor="middle">16:55</text><line x1="321.5" y1="412.3" x2="321.5" y2="583.7" stroke="rgba(204,206,220,0.245)" stroke-width="1"/><text x="321.5" y="601.8" class="ax" text-anchor="middle">17:00</text><line x1="387.5" y1="412.3" x2="387.5" y2="583.7" stroke="rgba(204,206,220,0.245)" stroke-width="1"/><text x="387.5" y="601.8" class="ax" text-anchor="middle">17:05</text><line x1="453.5" y1="412.3" x2="453.5" y2="583.7" stroke="rgba(204,206,220,0.245)" stroke-width="1"/><text x="453.5" y="601.8" class="ax" text-anchor="middle">17:10</text><line x1="519.5" y1="412.3" x2="519.5" y2="583.7" stroke="rgba(204,206,220,0.245)" stroke-width="1"/><text x="519.5" y="601.8" class="ax" text-anchor="middle">17:15</text><polyline points="55.74,583.70 77.30,583.70 79.50,555.13 81.70,583.70 90.70,583.70 92.90,555.13 95.10,583.70 103.60,583.70 105.80,555.13 108.00,583.70 117.00,583.70 119.20,555.13 121.40,583.70 130.20,583.70 132.40,555.13 134.60,583.70 143.40,583.70 145.60,555.13 147.80,583.70 156.00,583.70 158.20,555.13 160.40,555.13 162.60,583.70 169.70,583.70 171.90,555.13 174.10,583.70 182.90,583.70 185.10,555.13 187.30,583.70 196.00,583.70 198.20,555.13 200.40,583.70 209.10,583.70 211.30,555.13 213.50,555.13 215.70,583.70 222.60,583.70 224.80,555.13 227.00,583.70 235.70,583.70 237.90,555.13 240.10,583.70 248.70,583.70 250.90,555.13 253.10,583.70 261.90,583.70 264.10,555.13 266.30,583.70 275.00,583.70 277.20,555.13 279.40,555.13 281.60,583.70 290.70,583.70 292.90,555.13 295.10,583.70 301.50,583.70 303.70,555.13 305.90,555.13 308.10,583.70 315.00,583.70 317.20,555.13 319.40,583.70 327.80,583.70 330.00,555.13 332.20,583.70 341.00,583.70 343.20,555.13 345.40,583.70 356.60,583.70 358.80,555.13 361.00,583.70 369.60,583.70 371.80,555.13 374.00,583.70 380.70,583.70 382.90,555.13 385.10,583.70 395.90,583.70 398.10,555.13 400.30,583.70 406.70,583.70 408.90,555.13 411.10,555.13 413.30,583.70 422.30,583.70 424.50,555.13 426.70,583.70 435.70,583.70 437.90,555.13 440.10,583.70 446.60,583.70 448.80,555.13 451.00,583.70 461.80,583.70 464.00,555.13 466.20,583.70 472.70,583.70 474.90,555.13 477.10,583.70 486.10,583.70 488.30,555.13 490.50,583.70 501.50,583.70 503.70,555.13 505.90,583.70 512.60,583.70 514.80,555.13 517.00,583.70 525.70,583.70 527.90,555.13 530.10,555.13 532.30,583.70 566.00,583.70" fill="none" stroke="#7EB26D" stroke-width="1" stroke-opacity="1" stroke-linejoin="round"/><polyline points="55.74,583.70 77.30,583.70 79.50,498.00 81.70,583.70 90.70,583.70 92.90,440.87 95.10,583.70 103.60,583.70 105.80,483.72 108.00,583.70 117.00,583.70 119.20,498.00 121.40,583.70 130.20,583.70 132.40,426.58 134.60,583.70 143.40,583.70 145.60,540.85 147.80,583.70 156.00,583.70 158.20,526.57 160.40,526.57 162.60,583.70 169.70,583.70 171.90,469.43 174.10,583.70 182.90,583.70 185.10,540.85 187.30,583.70 196.00,583.70 198.20,455.15 200.40,583.70 209.10,583.70 211.30,526.57 213.50,526.57 215.70,583.70 222.60,583.70 224.80,526.57 227.00,583.70 235.70,583.70 237.90,512.28 240.10,583.70 248.70,583.70 250.90,526.57 253.10,583.70 261.90,583.70 264.10,555.13 266.30,583.70 275.00,583.70 277.20,555.13 279.40,555.13 281.60,583.70 290.70,583.70 292.90,498.00 295.10,583.70 301.50,583.70 303.70,526.57 305.90,526.57 308.10,583.70 315.00,583.70 317.20,512.28 319.40,583.70 327.80,583.70 330.00,555.13 332.20,583.70 341.00,583.70 343.20,512.28 345.40,583.70 356.60,583.70 358.80,498.00 361.00,583.70 369.60,583.70 371.80,455.15 374.00,583.70 380.70,583.70 382.90,555.13 385.10,583.70 395.90,583.70 398.10,498.00 400.30,583.70 406.70,583.70 408.90,555.13 411.10,555.13 413.30,583.70 422.30,583.70 424.50,512.28 426.70,583.70 435.70,583.70 437.90,498.00 440.10,583.70 446.60,583.70 448.80,540.85 451.00,583.70 461.80,583.70 464.00,526.57 466.20,583.70 472.70,583.70 474.90,526.57 477.10,583.70 486.10,583.70 488.30,540.85 490.50,583.70 501.50,583.70 503.70,498.00 505.90,583.70 512.60,583.70 514.80,555.13 517.00,583.70 525.70,583.70 527.90,540.85 530.10,540.85 532.30,583.70 566.00,583.70" fill="none" stroke="#EAB839" stroke-width="1" stroke-opacity="1" stroke-linejoin="round"/><line x1="47.0" y1="887.5" x2="568.7" y2="887.5" stroke="rgba(204,206,220,0.245)" stroke-width="1"/><text x="40.6" y="890.8" class="ax" text-anchor="end">0</text><line x1="47.0" y1="830.5" x2="568.7" y2="830.5" stroke="rgba(204,206,220,0.245)" stroke-width="1"/><text x="40.6" y="833.7" class="ax" text-anchor="end">50</text><line x1="47.0" y1="773.5" x2="568.7" y2="773.5" stroke="rgba(204,206,220,0.245)" stroke-width="1"/><text x="40.6" y="776.5" class="ax" text-anchor="end">100</text><line x1="47.0" y1="716.5" x2="568.7" y2="716.5" stroke="rgba(204,206,220,0.245)" stroke-width="1"/><text x="40.6" y="719.4" class="ax" text-anchor="end">150</text><line x1="48.5" y1="716.4" x2="48.5" y2="887.8" stroke="rgba(204,206,220,0.245)" stroke-width="1"/><text x="48.5" y="905.8" class="ax" text-anchor="middle">16:40</text><line x1="115.5" y1="716.4" x2="115.5" y2="887.8" stroke="rgba(204,206,220,0.245)" stroke-width="1"/><text x="115.6" y="905.8" class="ax" text-anchor="middle">16:45</text><line x1="182.5" y1="716.4" x2="182.5" y2="887.8" stroke="rgba(204,206,220,0.245)" stroke-width="1"/><text x="182.8" y="905.8" class="ax" text-anchor="middle">16:50</text><line x1="249.5" y1="716.4" x2="249.5" y2="887.8" stroke="rgba(204,206,220,0.245)" stroke-width="1"/><text x="249.9" y="905.8" class="ax" text-anchor="middle">16:55</text><line x1="317.5" y1="716.4" x2="317.5" y2="887.8" stroke="rgba(204,206,220,0.245)" stroke-width="1"/><text x="317.1" y="905.8" class="ax" text-anchor="middle">17:00</text><line x1="384.5" y1="716.4" x2="384.5" y2="887.8" stroke="rgba(204,206,220,0.245)" stroke-width="1"/><text x="384.2" y="905.8" class="ax" text-anchor="middle">17:05</text><line x1="451.5" y1="716.4" x2="451.5" y2="887.8" stroke="rgba(204,206,220,0.245)" stroke-width="1"/><text x="451.3" y="905.8" class="ax" text-anchor="middle">17:10</text><line x1="518.5" y1="716.4" x2="518.5" y2="887.8" stroke="rgba(204,206,220,0.245)" stroke-width="1"/><text x="518.5" y="905.8" class="ax" text-anchor="middle">17:15</text><polygon points="46.71,887.80 48.95,887.80 51.19,887.80 53.42,887.80 55.66,887.80 57.90,887.80 60.14,887.80 62.38,887.80 64.61,887.80 66.85,887.80 69.09,887.80 71.33,887.80 73.57,887.80 75.80,887.80 78.04,887.80 80.28,887.80 82.52,887.80 84.76,887.80 86.99,887.80 89.23,887.80 91.47,887.80 93.71,887.80 95.95,887.80 98.18,887.80 100.42,887.80 102.66,887.80 104.90,887.80 107.14,887.80 109.37,887.80 111.61,887.80 113.85,887.80 116.09,887.80 118.33,887.80 120.56,887.80 122.80,887.80 125.04,887.80 127.28,887.80 129.52,887.80 131.75,887.80 133.99,887.80 136.23,887.80 138.47,887.80 140.71,887.80 142.94,887.80 145.18,887.80 147.42,887.80 149.66,887.80 151.90,887.80 154.13,887.80 156.37,887.80 158.61,887.80 160.85,887.80 163.09,887.80 165.32,887.80 167.56,887.80 169.80,887.80 172.04,887.80 174.28,887.80 176.51,887.80 178.75,887.80 180.99,887.80 183.23,887.80 185.47,887.80 187.70,887.80 189.94,887.80 192.18,887.80 194.42,887.80 196.66,887.80 198.89,887.80 201.13,887.80 203.37,887.80 205.61,887.80 207.85,887.80 210.08,887.80 212.32,887.80 214.56,887.80 216.80,887.80 219.04,887.80 221.27,887.80 223.51,887.80 225.75,887.80 227.99,887.80 230.23,887.80 232.46,887.80 234.70,887.80 236.94,887.80 239.18,887.80 241.42,887.80 243.65,887.80 245.89,887.80 248.13,887.80 250.37,887.80 252.61,887.80 254.84,887.80 257.08,887.80 259.32,887.80 261.56,887.80 263.80,887.80 266.03,887.80 268.27,887.80 270.51,887.80 272.75,887.80 274.99,887.80 277.22,887.80 279.46,887.80 281.70,887.80 283.94,887.80 286.18,887.80 288.41,887.80 290.65,887.80 292.89,887.80 295.13,887.80 297.37,887.80 299.60,887.80 301.84,887.80 304.08,887.80 306.32,887.80 308.56,887.80 310.79,887.80 313.03,887.80 315.27,887.80 317.51,887.80 319.75,887.80 321.98,887.80 324.22,887.80 326.46,887.80 328.70,887.80 330.94,887.80 333.17,887.80 335.41,887.80 337.65,887.80 339.89,887.80 342.13,887.80 344.36,887.80 346.60,887.80 348.84,887.80 351.08,887.80 353.32,887.80 355.55,887.80 357.79,887.80 360.03,887.80 362.27,887.80 364.51,887.80 366.74,887.80 368.98,887.80 371.22,887.80 373.46,887.80 375.70,887.80 377.93,887.80 380.17,887.80 382.41,887.80 384.65,887.80 386.89,887.80 389.12,887.80 391.36,887.80 393.60,887.80 395.84,887.80 398.08,887.80 400.31,887.80 402.55,887.80 404.79,887.80 407.03,887.80 409.27,887.80 411.50,887.80 413.74,887.80 415.98,887.80 418.22,887.80 420.46,818.38 422.69,751.28 424.93,748.12 427.17,747.64 429.41,748.60 431.65,747.08 433.88,749.90 436.12,747.98 438.36,748.49 440.60,748.56 442.84,749.19 445.07,747.26 447.31,746.73 449.55,749.10 451.79,748.14 454.03,751.17 456.26,747.95 458.50,748.23 460.74,746.49 462.98,747.35 465.22,750.05 467.45,749.54 469.69,748.12 471.93,751.37 474.17,749.16 476.41,750.63 478.64,750.89 480.88,751.18 483.12,747.62 485.36,750.83 487.60,750.23 489.83,749.51 492.07,747.10 494.31,751.07 496.55,749.22 498.79,748.72 501.02,747.04 503.26,747.36 505.50,747.14 507.74,750.08 509.98,749.39 512.21,749.68 514.45,747.03 516.69,746.66 518.93,750.72 521.17,750.59 523.40,750.31 525.64,750.31 527.88,749.04 530.12,783.67 532.36,853.09 534.59,887.80 536.83,887.80 539.07,887.80 541.31,887.80 543.55,887.80 545.78,887.80 548.02,887.80 550.26,887.80 552.50,887.80 554.74,887.80 556.97,887.80 559.21,887.80 561.45,887.80 563.69,887.80 565.93,887.80 565.93,887.80 46.71,887.80" fill="#7EB26D" fill-opacity="0.1" stroke="none"/><polygon points="46.71,887.80 48.95,887.80 51.19,887.80 53.42,887.80 55.66,887.80 57.90,887.80 60.14,887.80 62.38,887.80 64.61,887.80 66.85,887.80 69.09,887.80 71.33,887.80 73.57,887.80 75.80,887.80 78.04,887.80 80.28,887.80 82.52,887.80 84.76,887.80 86.99,887.80 89.23,887.80 91.47,887.80 93.71,887.80 95.95,887.80 98.18,887.80 100.42,887.80 102.66,887.80 104.90,887.80 107.14,887.80 109.37,887.80 111.61,887.80 113.85,887.80 116.09,887.80 118.33,887.80 120.56,887.80 122.80,887.80 125.04,887.80 127.28,887.80 129.52,887.80 131.75,887.80 133.99,887.80 136.23,887.80 138.47,887.80 140.71,887.80 142.94,887.80 145.18,887.80 147.42,887.80 149.66,887.80 151.90,887.80 154.13,887.80 156.37,887.80 158.61,887.80 160.85,887.80 163.09,887.80 165.32,887.80 167.56,887.80 169.80,887.80 172.04,887.80 174.28,887.80 176.51,887.80 178.75,887.80 180.99,887.80 183.23,887.80 185.47,887.80 187.70,887.80 189.94,887.80 192.18,887.80 194.42,887.80 196.66,887.80 198.89,887.80 201.13,887.80 203.37,887.80 205.61,887.80 207.85,887.80 210.08,887.80 212.32,887.80 214.56,887.80 216.80,887.80 219.04,887.80 221.27,887.80 223.51,887.80 225.75,887.80 227.99,887.80 230.23,887.80 232.46,887.80 234.70,887.80 236.94,887.80 239.18,887.80 241.42,887.80 243.65,887.80 245.89,887.80 248.13,887.80 250.37,887.80 252.61,887.80 254.84,887.80 257.08,887.80 259.32,887.80 261.56,887.80 263.80,887.80 266.03,887.80 268.27,887.80 270.51,887.80 272.75,887.80 274.99,887.80 277.22,887.80 279.46,887.80 281.70,887.80 283.94,887.80 286.18,887.80 288.41,887.80 290.65,887.80 292.89,887.80 295.13,887.80 297.37,887.80 299.60,887.80 301.84,887.80 304.08,887.80 306.32,887.80 308.56,887.80 310.79,887.80 313.03,887.80 315.27,887.80 317.51,887.80 319.75,887.80 321.98,887.80 324.22,887.80 326.46,887.80 328.70,887.80 330.94,887.80 333.17,887.80 335.41,887.80 337.65,887.80 339.89,887.80 342.13,887.80 344.36,887.80 346.60,887.80 348.84,887.80 351.08,887.80 353.32,887.80 355.55,887.80 357.79,887.80 360.03,887.80 362.27,887.80 364.51,887.80 366.74,887.80 368.98,887.80 371.22,887.80 373.46,887.80 375.70,887.80 377.93,887.80 380.17,887.80 382.41,887.80 384.65,887.80 386.89,887.80 389.12,887.80 391.36,887.80 393.60,887.80 395.84,887.80 398.08,887.80 400.31,887.80 402.55,887.80 404.79,887.80 407.03,887.80 409.27,887.80 411.50,887.80 413.74,887.80 415.98,887.80 418.22,887.80 420.46,818.38 422.69,751.28 424.93,748.12 427.17,747.64 429.41,748.60 431.65,747.08 433.88,749.90 436.12,747.98 438.36,748.49 440.60,748.56 442.84,749.19 445.07,747.26 447.31,746.73 449.55,749.10 451.79,748.14 454.03,751.17 456.26,747.95 458.50,748.23 460.74,746.49 462.98,747.35 465.22,750.05 467.45,749.54 469.69,748.12 471.93,751.37 474.17,749.16 476.41,750.63 478.64,750.89 480.88,751.18 483.12,747.62 485.36,750.83 487.60,750.23 489.83,749.51 492.07,747.10 494.31,751.07 496.55,749.22 498.79,748.72 501.02,747.04 503.26,747.36 505.50,747.14 507.74,750.08 509.98,749.39 512.21,749.68 514.45,747.03 516.69,746.66 518.93,750.72 521.17,750.59 523.40,750.31 525.64,750.31 527.88,749.04 530.12,783.67 532.36,853.09 534.59,887.80 536.83,887.80 539.07,887.80 541.31,887.80 543.55,887.80 545.78,887.80 548.02,887.80 550.26,887.80 552.50,887.80 554.74,887.80 556.97,887.80 559.21,887.80 561.45,887.80 563.69,887.80 565.93,887.80 565.93,887.80 46.71,887.80" fill="#EAB839" fill-opacity="0.1" stroke="none"/><polyline points="46.71,887.80 48.95,887.80 51.19,887.80 53.42,887.80 55.66,887.80 57.90,887.80 60.14,887.80 62.38,887.80 64.61,887.80 66.85,887.80 69.09,887.80 71.33,887.80 73.57,887.80 75.80,887.80 78.04,887.80 80.28,887.80 82.52,887.80 84.76,887.80 86.99,887.80 89.23,887.80 91.47,887.80 93.71,887.80 95.95,887.80 98.18,887.80 100.42,887.80 102.66,887.80 104.90,887.80 107.14,887.80 109.37,887.80 111.61,887.80 113.85,887.80 116.09,887.80 118.33,887.80 120.56,887.80 122.80,887.80 125.04,887.80 127.28,887.80 129.52,887.80 131.75,887.80 133.99,887.80 136.23,887.80 138.47,887.80 140.71,887.80 142.94,887.80 145.18,887.80 147.42,887.80 149.66,887.80 151.90,887.80 154.13,887.80 156.37,887.80 158.61,887.80 160.85,887.80 163.09,887.80 165.32,887.80 167.56,887.80 169.80,887.80 172.04,887.80 174.28,887.80 176.51,887.80 178.75,887.80 180.99,887.80 183.23,887.80 185.47,887.80 187.70,887.80 189.94,887.80 192.18,887.80 194.42,887.80 196.66,887.80 198.89,887.80 201.13,887.80 203.37,887.80 205.61,887.80 207.85,887.80 210.08,887.80 212.32,887.80 214.56,887.80 216.80,887.80 219.04,887.80 221.27,887.80 223.51,887.80 225.75,887.80 227.99,887.80 230.23,887.80 232.46,887.80 234.70,887.80 236.94,887.80 239.18,887.80 241.42,887.80 243.65,887.80 245.89,887.80 248.13,887.80 250.37,887.80 252.61,887.80 254.84,887.80 257.08,887.80 259.32,887.80 261.56,887.80 263.80,887.80 266.03,887.80 268.27,887.80 270.51,887.80 272.75,887.80 274.99,887.80 277.22,887.80 279.46,887.80 281.70,887.80 283.94,887.80 286.18,887.80 288.41,887.80 290.65,887.80 292.89,887.80 295.13,887.80 297.37,887.80 299.60,887.80 301.84,887.80 304.08,887.80 306.32,887.80 308.56,887.80 310.79,887.80 313.03,887.80 315.27,887.80 317.51,887.80 319.75,887.80 321.98,887.80 324.22,887.80 326.46,887.80 328.70,887.80 330.94,887.80 333.17,887.80 335.41,887.80 337.65,887.80 339.89,887.80 342.13,887.80 344.36,887.80 346.60,887.80 348.84,887.80 351.08,887.80 353.32,887.80 355.55,887.80 357.79,887.80 360.03,887.80 362.27,887.80 364.51,887.80 366.74,887.80 368.98,887.80 371.22,887.80 373.46,887.80 375.70,887.80 377.93,887.80 380.17,887.80 382.41,887.80 384.65,887.80 386.89,887.80 389.12,887.80 391.36,887.80 393.60,887.80 395.84,887.80 398.08,887.80 400.31,887.80 402.55,887.80 404.79,887.80 407.03,887.80 409.27,887.80 411.50,887.80 413.74,887.80 415.98,887.80 418.22,887.80 420.46,818.38 422.69,751.28 424.93,748.12 427.17,747.64 429.41,748.60 431.65,747.08 433.88,749.90 436.12,747.98 438.36,748.49 440.60,748.56 442.84,749.19 445.07,747.26 447.31,746.73 449.55,749.10 451.79,748.14 454.03,751.17 456.26,747.95 458.50,748.23 460.74,746.49 462.98,747.35 465.22,750.05 467.45,749.54 469.69,748.12 471.93,751.37 474.17,749.16 476.41,750.63 478.64,750.89 480.88,751.18 483.12,747.62 485.36,750.83 487.60,750.23 489.83,749.51 492.07,747.10 494.31,751.07 496.55,749.22 498.79,748.72 501.02,747.04 503.26,747.36 505.50,747.14 507.74,750.08 509.98,749.39 512.21,749.68 514.45,747.03 516.69,746.66 518.93,750.72 521.17,750.59 523.40,750.31 525.64,750.31 527.88,749.04 530.12,783.67 532.36,853.09 534.59,887.80 536.83,887.80 539.07,887.80 541.31,887.80 543.55,887.80 545.78,887.80 548.02,887.80 550.26,887.80 552.50,887.80 554.74,887.80 556.97,887.80 559.21,887.80 561.45,887.80 563.69,887.80 565.93,887.80" fill="none" stroke="#EAB839" stroke-width="1" stroke-opacity="1" stroke-linejoin="round"/><line x1="645.0" y1="242.5" x2="1158.8" y2="242.5" stroke="rgba(204,206,220,0.245)" stroke-width="1"/><text x="639.0" y="245.5" class="ax" text-anchor="end">0%</text><line x1="645.0" y1="218.5" x2="1158.8" y2="218.5" stroke="rgba(204,206,220,0.245)" stroke-width="1"/><text x="639.0" y="221.5" class="ax" text-anchor="end">25%</text><line x1="645.0" y1="194.5" x2="1158.8" y2="194.5" stroke="rgba(204,206,220,0.245)" stroke-width="1"/><text x="639.0" y="197.5" class="ax" text-anchor="end">50%</text><line x1="645.0" y1="170.5" x2="1158.8" y2="170.5" stroke="rgba(204,206,220,0.245)" stroke-width="1"/><text x="639.0" y="173.5" class="ax" text-anchor="end">75%</text><line x1="645.0" y1="146.5" x2="1158.8" y2="146.5" stroke="rgba(204,206,220,0.245)" stroke-width="1"/><text x="639.0" y="149.5" class="ax" text-anchor="end">100%</text><line x1="646.5" y1="146.5" x2="646.5" y2="242.5" stroke="rgba(204,206,220,0.245)" stroke-width="1"/><text x="646.5" y="259.9" class="ax" text-anchor="middle">16:40</text><line x1="712.5" y1="146.5" x2="712.5" y2="242.5" stroke="rgba(204,206,220,0.245)" stroke-width="1"/><text x="712.6" y="259.9" class="ax" text-anchor="middle">16:45</text><line x1="778.5" y1="146.5" x2="778.5" y2="242.5" stroke="rgba(204,206,220,0.245)" stroke-width="1"/><text x="778.8" y="259.9" class="ax" text-anchor="middle">16:50</text><line x1="844.5" y1="146.5" x2="844.5" y2="242.5" stroke="rgba(204,206,220,0.245)" stroke-width="1"/><text x="844.9" y="259.9" class="ax" text-anchor="middle">16:55</text><line x1="911.5" y1="146.5" x2="911.5" y2="242.5" stroke="rgba(204,206,220,0.245)" stroke-width="1"/><text x="911.0" y="259.9" class="ax" text-anchor="middle">17:00</text><line x1="977.5" y1="146.5" x2="977.5" y2="242.5" stroke="rgba(204,206,220,0.245)" stroke-width="1"/><text x="977.1" y="259.9" class="ax" text-anchor="middle">17:05</text><line x1="1043.5" y1="146.5" x2="1043.5" y2="242.5" stroke="rgba(204,206,220,0.245)" stroke-width="1"/><text x="1043.3" y="259.9" class="ax" text-anchor="middle">17:10</text><line x1="1109.5" y1="146.5" x2="1109.5" y2="242.5" stroke="rgba(204,206,220,0.245)" stroke-width="1"/><text x="1109.4" y="259.9" class="ax" text-anchor="middle">17:15</text><polygon points="644.74,146.50 1153.94,146.50 1153.94,240.79 1151.73,241.77 1149.53,241.48 1147.32,240.85 1145.12,241.77 1142.92,241.86 1140.71,240.31 1138.51,241.47 1136.30,241.36 1134.10,240.83 1131.89,241.63 1129.69,241.56 1127.49,240.68 1125.28,241.91 1123.08,241.67 1120.87,239.20 1118.67,240.57 1116.46,240.16 1114.26,239.34 1112.06,240.47 1109.85,240.38 1107.65,239.23 1105.44,240.33 1103.24,240.49 1101.03,239.04 1098.83,240.01 1096.62,240.30 1094.42,239.29 1092.22,240.03 1090.01,240.45 1087.81,238.97 1085.60,240.07 1083.40,240.50 1081.19,239.14 1078.99,240.17 1076.79,240.49 1074.58,239.01 1072.38,240.13 1070.17,240.19 1067.97,239.48 1065.76,240.44 1063.56,240.54 1061.36,239.27 1059.15,240.51 1056.95,240.50 1054.74,239.04 1052.54,240.04 1050.33,240.26 1048.13,239.37 1045.93,240.04 1043.72,240.08 1041.52,239.12 1039.31,240.04 1037.11,240.30 1034.90,239.22 1032.70,240.32 1030.49,240.18 1028.29,239.23 1026.09,240.29 1023.88,240.23 1021.68,239.27 1019.47,240.05 1017.27,240.14 1015.06,239.20 1012.86,240.29 1010.66,241.48 1008.45,240.71 1006.25,241.78 1004.04,241.60 1001.84,240.81 999.63,241.47 997.43,241.60 995.23,240.57 993.02,241.74 990.82,241.60 988.61,240.45 986.41,241.65 984.20,241.82 982.00,240.41 979.80,241.92 977.59,241.82 975.39,240.61 973.18,241.91 970.98,241.62 968.77,240.56 966.57,241.64 964.36,241.40 962.16,240.63 959.96,241.40 957.75,241.59 955.55,240.60 953.34,241.72 951.14,241.40 948.93,240.79 946.73,241.68 944.53,241.77 942.32,240.53 940.12,241.79 937.91,241.76 935.71,240.72 933.50,241.80 931.30,241.45 929.10,240.37 926.89,241.67 924.69,241.39 922.48,240.56 920.28,241.55 918.07,241.36 915.87,240.86 913.67,241.85 911.46,241.61 909.26,240.67 907.05,241.55 904.85,241.36 902.64,240.39 900.44,241.84 898.23,241.46 896.03,240.35 893.83,241.84 891.62,241.85 889.42,240.77 887.21,241.51 885.01,241.38 882.80,240.64 880.60,241.70 878.40,241.36 876.19,240.41 873.99,241.73 871.78,241.47 869.58,240.77 867.37,241.65 865.17,241.49 862.97,240.42 860.76,241.40 858.56,241.54 856.35,240.82 854.15,241.46 851.94,241.55 849.74,240.59 847.54,241.44 845.33,241.41 843.13,240.51 840.92,241.81 838.72,241.81 836.51,240.74 834.31,241.80 832.10,241.71 829.90,240.32 827.70,241.35 825.49,241.38 823.29,240.61 821.08,241.37 818.88,241.53 816.67,240.72 814.47,241.76 812.27,241.91 810.06,240.85 807.86,241.72 805.65,241.63 803.45,240.74 801.24,241.50 799.04,241.45 796.84,240.40 794.63,240.09 792.43,240.01 790.22,239.06 788.02,240.45 785.81,240.39 783.61,239.08 781.41,240.27 779.20,240.14 777.00,239.43 774.79,240.37 772.59,240.43 770.38,239.12 768.18,240.08 765.97,240.02 763.77,239.22 761.57,240.56 759.36,240.27 757.16,239.44 754.95,240.28 752.75,240.03 750.54,239.51 748.34,240.49 746.14,240.10 743.93,239.37 741.73,240.38 739.52,240.52 737.32,239.47 735.11,240.30 732.91,240.31 730.71,238.95 728.50,240.09 726.30,240.51 724.09,239.31 721.89,240.38 719.68,240.43 717.48,239.44 715.28,240.23 713.07,240.08 710.87,239.51 708.66,240.37 706.46,240.52 704.25,239.44 702.05,240.58 699.84,240.55 697.64,239.33 695.44,240.49 693.23,240.46 691.03,239.49 688.82,240.54 686.62,240.21 684.41,239.46 682.21,240.35 680.01,240.35 677.80,239.06 675.60,240.08 673.39,240.13 671.19,239.01 668.98,240.55 666.78,241.53 664.58,240.51 662.37,241.63 660.17,241.53 657.96,240.32 655.76,241.60 653.55,241.71 651.35,240.63 649.15,241.92 646.94,241.77 644.74,240.53" fill="#EF843C" fill-opacity="0.1"/><polyline points="644.74,146.50 1153.94,146.50" fill="none" stroke="#EF843C" stroke-width="1" stroke-opacity="1" stroke-linejoin="round"/><polyline points="644.74,240.53 646.94,241.77 649.15,241.92 651.35,240.63 653.55,241.71 655.76,241.60 657.96,240.32 660.17,241.53 662.37,241.63 664.58,240.51 666.78,241.53 668.98,240.55 671.19,239.01 673.39,240.13 675.60,240.08 677.80,239.06 680.01,240.35 682.21,240.35 684.41,239.46 686.62,240.21 688.82,240.54 691.03,239.49 693.23,240.46 695.44,240.49 697.64,239.33 699.84,240.55 702.05,240.58 704.25,239.44 706.46,240.52 708.66,240.37 710.87,239.51 713.07,240.08 715.28,240.23 717.48,239.44 719.68,240.43 721.89,240.38 724.09,239.31 726.30,240.51 728.50,240.09 730.71,238.95 732.91,240.31 735.11,240.30 737.32,239.47 739.52,240.52 741.73,240.38 743.93,239.37 746.14,240.10 748.34,240.49 750.54,239.51 752.75,240.03 754.95,240.28 757.16,239.44 759.36,240.27 761.57,240.56 763.77,239.22 765.97,240.02 768.18,240.08 770.38,239.12 772.59,240.43 774.79,240.37 777.00,239.43 779.20,240.14 781.41,240.27 783.61,239.08 785.81,240.39 788.02,240.45 790.22,239.06 792.43,240.01 794.63,240.09 796.84,240.40 799.04,241.45 801.24,241.50 803.45,240.74 805.65,241.63 807.86,241.72 810.06,240.85 812.27,241.91 814.47,241.76 816.67,240.72 818.88,241.53 821.08,241.37 823.29,240.61 825.49,241.38 827.70,241.35 829.90,240.32 832.10,241.71 834.31,241.80 836.51,240.74 838.72,241.81 840.92,241.81 843.13,240.51 845.33,241.41 847.54,241.44 849.74,240.59 851.94,241.55 854.15,241.46 856.35,240.82 858.56,241.54 860.76,241.40 862.97,240.42 865.17,241.49 867.37,241.65 869.58,240.77 871.78,241.47 873.99,241.73 876.19,240.41 878.40,241.36 880.60,241.70 882.80,240.64 885.01,241.38 887.21,241.51 889.42,240.77 891.62,241.85 893.83,241.84 896.03,240.35 898.23,241.46 900.44,241.84 902.64,240.39 904.85,241.36 907.05,241.55 909.26,240.67 911.46,241.61 913.67,241.85 915.87,240.86 918.07,241.36 920.28,241.55 922.48,240.56 924.69,241.39 926.89,241.67 929.10,240.37 931.30,241.45 933.50,241.80 935.71,240.72 937.91,241.76 940.12,241.79 942.32,240.53 944.53,241.77 946.73,241.68 948.93,240.79 951.14,241.40 953.34,241.72 955.55,240.60 957.75,241.59 959.96,241.40 962.16,240.63 964.36,241.40 966.57,241.64 968.77,240.56 970.98,241.62 973.18,241.91 975.39,240.61 977.59,241.82 979.80,241.92 982.00,240.41 984.20,241.82 986.41,241.65 988.61,240.45 990.82,241.60 993.02,241.74 995.23,240.57 997.43,241.60 999.63,241.47 1001.84,240.81 1004.04,241.60 1006.25,241.78 1008.45,240.71 1010.66,241.48 1012.86,240.29 1015.06,239.20 1017.27,240.14 1019.47,240.05 1021.68,239.27 1023.88,240.23 1026.09,240.29 1028.29,239.23 1030.49,240.18 1032.70,240.32 1034.90,239.22 1037.11,240.30 1039.31,240.04 1041.52,239.12 1043.72,240.08 1045.93,240.04 1048.13,239.37 1050.33,240.26 1052.54,240.04 1054.74,239.04 1056.95,240.50 1059.15,240.51 1061.36,239.27 1063.56,240.54 1065.76,240.44 1067.97,239.48 1070.17,240.19 1072.38,240.13 1074.58,239.01 1076.79,240.49 1078.99,240.17 1081.19,239.14 1083.40,240.50 1085.60,240.07 1087.81,238.97 1090.01,240.45 1092.22,240.03 1094.42,239.29 1096.62,240.30 1098.83,240.01 1101.03,239.04 1103.24,240.49 1105.44,240.33 1107.65,239.23 1109.85,240.38 1112.06,240.47 1114.26,239.34 1116.46,240.16 1118.67,240.57 1120.87,239.20 1123.08,241.67 1125.28,241.91 1127.49,240.68 1129.69,241.56 1131.89,241.63 1134.10,240.83 1136.30,241.36 1138.51,241.47 1140.71,240.31 1142.92,241.86 1145.12,241.77 1147.32,240.85 1149.53,241.48 1151.73,241.77 1153.94,240.79" fill="none" stroke="#6ED0E0" stroke-width="1" stroke-opacity="1" stroke-linejoin="round"/><polyline points="644.74,241.13 646.94,242.37 649.15,242.52 651.35,241.23 653.55,242.31 655.76,242.20 657.96,240.92 660.17,242.13 662.37,242.23 664.58,241.11 666.78,242.13 668.98,241.15 671.19,239.61 673.39,240.73 675.60,240.68 677.80,239.66 680.01,240.95 682.21,240.95 684.41,240.06 686.62,240.81 688.82,241.14 691.03,240.09 693.23,241.06 695.44,241.09 697.64,239.93 699.84,241.15 702.05,241.18 704.25,240.04 706.46,241.12 708.66,240.97 710.87,240.11 713.07,240.68 715.28,240.83 717.48,240.04 719.68,241.03 721.89,240.98 724.09,239.91 726.30,241.11 728.50,240.69 730.71,239.55 732.91,240.91 735.11,240.90 737.32,240.07 739.52,241.12 741.73,240.98 743.93,239.97 746.14,240.70 748.34,241.09 750.54,240.11 752.75,240.63 754.95,240.88 757.16,240.04 759.36,240.87 761.57,241.16 763.77,239.82 765.97,240.62 768.18,240.68 770.38,239.72 772.59,241.03 774.79,240.97 777.00,240.03 779.20,240.74 781.41,240.87 783.61,239.68 785.81,240.99 788.02,241.05 790.22,239.66 792.43,240.61 794.63,240.69 796.84,241.00 799.04,242.05 801.24,242.10 803.45,241.34 805.65,242.23 807.86,242.32 810.06,241.45 812.27,242.51 814.47,242.36 816.67,241.32 818.88,242.13 821.08,241.97 823.29,241.21 825.49,241.98 827.70,241.95 829.90,240.92 832.10,242.31 834.31,242.40 836.51,241.34 838.72,242.41 840.92,242.41 843.13,241.11 845.33,242.01 847.54,242.04 849.74,241.19 851.94,242.15 854.15,242.06 856.35,241.42 858.56,242.14 860.76,242.00 862.97,241.02 865.17,242.09 867.37,242.25 869.58,241.37 871.78,242.07 873.99,242.33 876.19,241.01 878.40,241.96 880.60,242.30 882.80,241.24 885.01,241.98 887.21,242.11 889.42,241.37 891.62,242.45 893.83,242.44 896.03,240.95 898.23,242.06 900.44,242.44 902.64,240.99 904.85,241.96 907.05,242.15 909.26,241.27 911.46,242.21 913.67,242.45 915.87,241.46 918.07,241.96 920.28,242.15 922.48,241.16 924.69,241.99 926.89,242.27 929.10,240.97 931.30,242.05 933.50,242.40 935.71,241.32 937.91,242.36 940.12,242.39 942.32,241.13 944.53,242.37 946.73,242.28 948.93,241.39 951.14,242.00 953.34,242.32 955.55,241.20 957.75,242.19 959.96,242.00 962.16,241.23 964.36,242.00 966.57,242.24 968.77,241.16 970.98,242.22 973.18,242.51 975.39,241.21 977.59,242.42 979.80,242.52 982.00,241.01 984.20,242.42 986.41,242.25 988.61,241.05 990.82,242.20 993.02,242.34 995.23,241.17 997.43,242.20 999.63,242.07 1001.84,241.41 1004.04,242.20 1006.25,242.38 1008.45,241.31 1010.66,242.08 1012.86,240.89 1015.06,239.80 1017.27,240.74 1019.47,240.65 1021.68,239.87 1023.88,240.83 1026.09,240.89 1028.29,239.83 1030.49,240.78 1032.70,240.92 1034.90,239.82 1037.11,240.90 1039.31,240.64 1041.52,239.72 1043.72,240.68 1045.93,240.64 1048.13,239.97 1050.33,240.86 1052.54,240.64 1054.74,239.64 1056.95,241.10 1059.15,241.11 1061.36,239.87 1063.56,241.14 1065.76,241.04 1067.97,240.08 1070.17,240.79 1072.38,240.73 1074.58,239.61 1076.79,241.09 1078.99,240.77 1081.19,239.74 1083.40,241.10 1085.60,240.67 1087.81,239.57 1090.01,241.05 1092.22,240.63 1094.42,239.89 1096.62,240.90 1098.83,240.61 1101.03,239.64 1103.24,241.09 1105.44,240.93 1107.65,239.83 1109.85,240.98 1112.06,241.07 1114.26,239.94 1116.46,240.76 1118.67,241.17 1120.87,239.80 1123.08,242.27 1125.28,242.51 1127.49,241.28 1129.69,242.16 1131.89,242.23 1134.10,241.43 1136.30,241.96 1138.51,242.07 1140.71,240.91 1142.92,242.46 1145.12,242.37 1147.32,241.45 1149.53,242.08 1151.73,242.37 1153.94,241.39" fill="none" stroke="#7EB26D" stroke-width="1" stroke-opacity="0.8" stroke-linejoin="round"/><line x1="655.0" y1="453.5" x2="1159.3" y2="453.5" stroke="rgba(204,206,220,0.245)" stroke-width="1"/><text x="649.0" y="456.5" class="ax" text-anchor="end">0 MB</text><line x1="655.0" y1="427.5" x2="1159.3" y2="427.5" stroke="rgba(204,206,220,0.245)" stroke-width="1"/><text x="649.0" y="430.2" class="ax" text-anchor="end">50 GB</text><line x1="655.0" y1="400.5" x2="1159.3" y2="400.5" stroke="rgba(204,206,220,0.245)" stroke-width="1"/><text x="649.0" y="403.8" class="ax" text-anchor="end">100 GB</text><line x1="655.0" y1="374.5" x2="1159.3" y2="374.5" stroke="rgba(204,206,220,0.245)" stroke-width="1"/><text x="649.0" y="377.5" class="ax" text-anchor="end">150 GB</text><line x1="656.5" y1="374.5" x2="656.5" y2="453.5" stroke="rgba(204,206,220,0.245)" stroke-width="1"/><text x="656.5" y="470.0" class="ax" text-anchor="middle">16:40</text><line x1="721.5" y1="374.5" x2="721.5" y2="453.5" stroke="rgba(204,206,220,0.245)" stroke-width="1"/><text x="721.4" y="470.0" class="ax" text-anchor="middle">16:45</text><line x1="786.5" y1="374.5" x2="786.5" y2="453.5" stroke="rgba(204,206,220,0.245)" stroke-width="1"/><text x="786.3" y="470.0" class="ax" text-anchor="middle">16:50</text><line x1="851.5" y1="374.5" x2="851.5" y2="453.5" stroke="rgba(204,206,220,0.245)" stroke-width="1"/><text x="851.2" y="470.0" class="ax" text-anchor="middle">16:55</text><line x1="916.5" y1="374.5" x2="916.5" y2="453.5" stroke="rgba(204,206,220,0.245)" stroke-width="1"/><text x="916.1" y="470.0" class="ax" text-anchor="middle">17:00</text><line x1="980.5" y1="374.5" x2="980.5" y2="453.5" stroke="rgba(204,206,220,0.245)" stroke-width="1"/><text x="981.0" y="470.0" class="ax" text-anchor="middle">17:05</text><line x1="1045.5" y1="374.5" x2="1045.5" y2="453.5" stroke="rgba(204,206,220,0.245)" stroke-width="1"/><text x="1045.9" y="470.0" class="ax" text-anchor="middle">17:10</text><line x1="1110.5" y1="374.5" x2="1110.5" y2="453.5" stroke="rgba(204,206,220,0.245)" stroke-width="1"/><text x="1110.8" y="470.0" class="ax" text-anchor="middle">17:15</text><polygon points="655.77,453.50 1156.00,453.50 1156.00,449.18 655.77,449.18" fill="#7EB26D" fill-opacity="0.1"/><polygon points="655.77,449.18 1156.00,449.18 1156.00,443.97 655.77,443.97" fill="#EAB839" fill-opacity="0.1"/><polygon points="655.77,443.60 1156.00,443.60 1156.00,385.82 655.77,385.82" fill="#EF843C" fill-opacity="0.1"/><polyline points="655.77,385.82 1156.00,385.82" fill="none" stroke="#EF843C" stroke-width="1" stroke-opacity="1" stroke-linejoin="round"/><polyline points="655.77,443.97 1156.00,443.97" fill="none" stroke="#EAB839" stroke-width="1" stroke-opacity="1" stroke-linejoin="round"/><polyline points="655.77,443.60 1156.00,443.60" fill="none" stroke="#6ED0E0" stroke-width="1" stroke-opacity="1" stroke-linejoin="round"/><polyline points="655.77,449.18 1156.00,449.18" fill="none" stroke="#7EB26D" stroke-width="1" stroke-opacity="1" stroke-linejoin="round"/><line x1="1260.0" y1="241.5" x2="1747.8" y2="241.5" stroke="rgba(204,206,220,0.245)" stroke-width="1"/><text x="1254.0" y="244.5" class="ax" text-anchor="end">0 kb/s</text><line x1="1260.0" y1="222.5" x2="1747.8" y2="222.5" stroke="rgba(204,206,220,0.245)" stroke-width="1"/><text x="1254.0" y="225.5" class="ax" text-anchor="end">500 kb/s</text><line x1="1260.0" y1="203.5" x2="1747.8" y2="203.5" stroke="rgba(204,206,220,0.245)" stroke-width="1"/><text x="1254.0" y="206.5" class="ax" text-anchor="end">1 Mb/s</text><line x1="1260.0" y1="184.5" x2="1747.8" y2="184.5" stroke="rgba(204,206,220,0.245)" stroke-width="1"/><text x="1254.0" y="187.5" class="ax" text-anchor="end">1.50 Mb/s</text><line x1="1260.0" y1="165.5" x2="1747.8" y2="165.5" stroke="rgba(204,206,220,0.245)" stroke-width="1"/><text x="1254.0" y="168.5" class="ax" text-anchor="end">2 Mb/s</text><line x1="1260.0" y1="146.5" x2="1747.8" y2="146.5" stroke="rgba(204,206,220,0.245)" stroke-width="1"/><text x="1254.0" y="149.5" class="ax" text-anchor="end">2.50 Mb/s</text><line x1="1261.5" y1="146.5" x2="1261.5" y2="241.5" stroke="rgba(204,206,220,0.245)" stroke-width="1"/><text x="1261.5" y="259.9" class="ax" text-anchor="middle">16:40</text><line x1="1324.5" y1="146.5" x2="1324.5" y2="241.5" stroke="rgba(204,206,220,0.245)" stroke-width="1"/><text x="1324.3" y="259.9" class="ax" text-anchor="middle">16:45</text><line x1="1387.5" y1="146.5" x2="1387.5" y2="241.5" stroke="rgba(204,206,220,0.245)" stroke-width="1"/><text x="1387.0" y="259.9" class="ax" text-anchor="middle">16:50</text><line x1="1449.5" y1="146.5" x2="1449.5" y2="241.5" stroke="rgba(204,206,220,0.245)" stroke-width="1"/><text x="1449.8" y="259.9" class="ax" text-anchor="middle">16:55</text><line x1="1512.5" y1="146.5" x2="1512.5" y2="241.5" stroke="rgba(204,206,220,0.245)" stroke-width="1"/><text x="1512.6" y="259.9" class="ax" text-anchor="middle">17:00</text><line x1="1575.5" y1="146.5" x2="1575.5" y2="241.5" stroke="rgba(204,206,220,0.245)" stroke-width="1"/><text x="1575.3" y="259.9" class="ax" text-anchor="middle">17:05</text><line x1="1638.5" y1="146.5" x2="1638.5" y2="241.5" stroke="rgba(204,206,220,0.245)" stroke-width="1"/><text x="1638.1" y="259.9" class="ax" text-anchor="middle">17:10</text><line x1="1700.5" y1="146.5" x2="1700.5" y2="241.5" stroke="rgba(204,206,220,0.245)" stroke-width="1"/><text x="1700.9" y="259.9" class="ax" text-anchor="middle">17:15</text><polygon points="1259.83,241.04 1261.92,241.04 1264.01,241.04 1266.10,241.04 1268.20,241.04 1270.29,241.04 1272.38,241.04 1274.47,241.04 1276.56,241.04 1278.66,241.04 1280.75,239.49 1282.84,223.93 1284.93,211.34 1287.03,211.80 1289.12,211.38 1291.21,211.80 1293.30,211.81 1295.40,211.52 1297.49,211.44 1299.58,211.66 1301.67,211.46 1303.77,211.78 1305.86,211.82 1307.95,211.62 1310.04,211.28 1312.13,211.48 1314.23,211.60 1316.32,211.67 1318.41,211.30 1320.50,211.72 1322.60,211.15 1324.69,211.24 1326.78,211.48 1328.87,211.56 1330.97,211.34 1333.06,211.60 1335.15,211.32 1337.24,211.55 1339.33,211.82 1341.43,211.81 1343.52,211.67 1345.61,211.80 1347.70,211.20 1349.80,211.65 1351.89,211.64 1353.98,211.74 1356.07,211.66 1358.17,211.12 1360.26,211.67 1362.35,211.62 1364.44,211.86 1366.54,211.50 1368.63,211.71 1370.72,211.86 1372.81,211.79 1374.90,211.83 1377.00,211.63 1379.09,211.41 1381.18,211.29 1383.27,211.32 1385.37,211.56 1387.46,211.11 1389.55,211.31 1391.64,211.83 1393.74,211.18 1395.83,211.30 1397.92,211.75 1400.01,211.48 1402.10,213.04 1404.20,228.60 1406.29,241.04 1408.38,241.04 1410.47,241.04 1412.57,241.04 1414.66,241.04 1416.75,241.04 1418.84,241.04 1420.94,241.04 1423.03,241.04 1425.12,241.04 1427.21,241.04 1429.31,241.04 1431.40,241.04 1433.49,241.04 1435.58,241.04 1437.67,241.04 1439.77,241.04 1441.86,241.04 1443.95,241.04 1446.04,241.04 1448.14,241.04 1450.23,241.04 1452.32,241.04 1454.41,241.04 1456.51,241.04 1458.60,241.04 1460.69,241.04 1462.78,241.04 1464.87,241.04 1466.97,241.04 1469.06,241.04 1471.15,241.04 1473.24,241.04 1475.34,241.04 1477.43,241.04 1479.52,241.04 1481.61,241.04 1483.71,241.04 1485.80,241.04 1487.89,241.04 1489.98,241.04 1492.08,241.04 1494.17,241.04 1496.26,241.04 1498.35,241.04 1500.44,241.04 1502.54,241.04 1504.63,241.04 1506.72,241.04 1508.81,241.04 1510.91,241.04 1513.00,241.04 1515.09,241.04 1517.18,241.04 1519.28,241.04 1521.37,241.04 1523.46,241.04 1525.55,241.04 1527.64,241.04 1529.74,241.04 1531.83,241.04 1533.92,241.04 1536.01,241.04 1538.11,241.04 1540.20,241.04 1542.29,241.04 1544.38,241.04 1546.48,241.04 1548.57,241.04 1550.66,241.04 1552.75,241.04 1554.85,241.04 1556.94,241.04 1559.03,241.04 1561.12,241.04 1563.21,241.04 1565.31,241.04 1567.40,241.04 1569.49,241.04 1571.58,241.04 1573.68,241.04 1575.77,241.04 1577.86,241.04 1579.95,241.04 1582.05,241.04 1584.14,241.04 1586.23,241.04 1588.32,241.04 1590.41,241.04 1592.51,241.04 1594.60,241.04 1596.69,241.04 1598.78,241.04 1600.88,241.04 1602.97,241.04 1605.06,241.04 1607.15,237.85 1609.25,221.89 1611.34,210.41 1613.43,210.82 1615.52,210.34 1617.62,210.83 1619.71,210.89 1621.80,211.02 1623.89,210.88 1625.98,210.91 1628.08,210.71 1630.17,210.82 1632.26,210.43 1634.35,210.62 1636.45,210.39 1638.54,210.55 1640.63,210.54 1642.72,210.53 1644.82,210.88 1646.91,210.40 1649.00,210.74 1651.09,210.87 1653.18,210.36 1655.28,210.60 1657.37,210.68 1659.46,210.97 1661.55,210.94 1663.65,210.72 1665.74,210.41 1667.83,210.76 1669.92,210.95 1672.02,210.84 1674.11,210.92 1676.20,210.67 1678.29,210.53 1680.39,210.79 1682.48,210.81 1684.57,211.05 1686.66,210.36 1688.75,210.72 1690.85,210.44 1692.94,210.89 1695.03,210.80 1697.12,210.38 1699.22,210.44 1701.31,211.08 1703.40,210.42 1705.49,210.65 1707.59,210.80 1709.68,210.47 1711.77,213.91 1713.86,229.87 1715.95,241.04 1718.05,241.04 1720.14,241.04 1722.23,241.04 1724.32,241.04 1726.42,241.04 1728.51,241.04 1730.60,241.04 1732.69,241.04 1734.79,241.04 1736.88,241.04 1738.97,241.04 1741.06,241.04 1743.16,241.04 1743.16,241.50 1259.83,241.50" fill="#7EB26D" fill-opacity="0.1"/><polygon points="1259.83,203.40 1261.92,202.94 1264.01,203.03 1266.10,203.56 1268.20,203.66 1270.29,202.93 1272.38,203.26 1274.47,203.14 1276.56,203.72 1278.66,203.75 1280.75,201.23 1282.84,179.27 1284.93,161.63 1287.03,161.63 1289.12,161.32 1291.21,161.69 1293.30,161.70 1295.40,161.88 1297.49,161.27 1299.58,162.21 1301.67,161.92 1303.77,162.31 1305.86,162.31 1307.95,162.02 1310.04,161.69 1312.13,161.99 1314.23,162.26 1316.32,162.33 1318.41,161.48 1320.50,161.96 1322.60,161.73 1324.69,161.52 1326.78,161.40 1328.87,161.78 1330.97,161.12 1333.06,161.52 1335.15,161.42 1337.24,161.91 1339.33,162.38 1341.43,161.81 1343.52,162.19 1345.61,161.70 1347.70,161.26 1349.80,162.10 1351.89,161.89 1353.98,162.01 1356.07,161.46 1358.17,161.30 1360.26,161.47 1362.35,161.98 1364.44,162.19 1366.54,161.72 1368.63,161.92 1370.72,162.29 1372.81,162.10 1374.90,162.48 1377.00,162.09 1379.09,161.61 1381.18,161.37 1383.27,161.19 1385.37,161.94 1387.46,161.65 1389.55,161.40 1391.64,161.74 1393.74,161.29 1395.83,161.24 1397.92,161.95 1400.01,161.39 1402.10,163.90 1404.20,185.86 1406.29,203.04 1408.38,203.02 1410.47,203.25 1412.57,202.96 1414.66,203.16 1416.75,203.15 1418.84,203.59 1420.94,203.77 1423.03,203.68 1425.12,203.46 1427.21,203.70 1429.31,203.01 1431.40,203.27 1433.49,203.21 1435.58,203.21 1437.67,203.16 1439.77,203.34 1441.86,203.80 1443.95,203.05 1446.04,203.09 1448.14,203.33 1450.23,203.30 1452.32,203.18 1454.41,203.74 1456.51,203.10 1458.60,203.56 1460.69,203.73 1462.78,203.55 1464.87,203.11 1466.97,203.61 1469.06,203.10 1471.15,202.88 1473.24,203.33 1475.34,203.44 1477.43,203.35 1479.52,203.15 1481.61,203.08 1483.71,203.22 1485.80,203.19 1487.89,203.73 1489.98,203.66 1492.08,203.56 1494.17,203.10 1496.26,203.51 1498.35,203.26 1500.44,203.79 1502.54,203.75 1504.63,203.55 1506.72,203.17 1508.81,203.15 1510.91,203.16 1513.00,203.53 1515.09,203.31 1517.18,203.36 1519.28,203.36 1521.37,203.69 1523.46,202.96 1525.55,203.61 1527.64,202.87 1529.74,202.91 1531.83,203.79 1533.92,203.37 1536.01,203.03 1538.11,202.88 1540.20,203.38 1542.29,203.55 1544.38,203.60 1546.48,202.91 1548.57,203.60 1550.66,203.25 1552.75,203.67 1554.85,203.31 1556.94,202.90 1559.03,203.68 1561.12,203.02 1563.21,203.32 1565.31,202.96 1567.40,203.14 1569.49,203.58 1571.58,202.95 1573.68,203.34 1575.77,203.78 1577.86,203.80 1579.95,203.34 1582.05,203.38 1584.14,203.52 1586.23,203.67 1588.32,203.48 1590.41,203.50 1592.51,203.01 1594.60,203.80 1596.69,203.09 1598.78,203.01 1600.88,203.69 1602.97,202.92 1605.06,203.13 1607.15,198.63 1609.25,174.67 1611.34,157.79 1613.43,158.09 1615.52,157.44 1617.62,158.07 1619.71,158.48 1621.80,157.90 1623.89,157.67 1625.98,158.30 1628.08,158.17 1630.17,157.58 1632.26,157.32 1634.35,157.42 1636.45,157.52 1638.54,158.14 1640.63,157.77 1642.72,157.58 1644.82,158.47 1646.91,157.92 1649.00,158.06 1651.09,157.84 1653.18,157.76 1655.28,157.96 1657.37,157.95 1659.46,158.46 1661.55,157.75 1663.65,158.16 1665.74,157.14 1667.83,158.27 1669.92,158.51 1672.02,158.39 1674.11,158.32 1676.20,157.49 1678.29,157.79 1680.39,157.94 1682.48,158.14 1684.57,158.44 1686.66,157.89 1688.75,157.78 1690.85,157.88 1692.94,158.30 1695.03,158.03 1697.12,157.24 1699.22,158.05 1701.31,158.06 1703.40,157.62 1705.49,158.29 1707.59,157.59 1709.68,157.33 1711.77,162.69 1713.86,186.65 1715.95,202.88 1718.05,203.57 1720.14,203.70 1722.23,203.66 1724.32,203.31 1726.42,203.16 1728.51,202.91 1730.60,203.12 1732.69,203.19 1734.79,203.08 1736.88,203.37 1738.97,203.28 1741.06,203.77 1743.16,203.06 1743.16,241.04 1741.06,241.04 1738.97,241.04 1736.88,241.04 1734.79,241.04 1732.69,241.04 1730.60,241.04 1728.51,241.04 1726.42,241.04 1724.32,241.04 1722.23,241.04 1720.14,241.04 1718.05,241.04 1715.95,241.04 1713.86,229.87 1711.77,213.91 1709.68,210.47 1707.59,210.80 1705.49,210.65 1703.40,210.42 1701.31,211.08 1699.22,210.44 1697.12,210.38 1695.03,210.80 1692.94,210.89 1690.85,210.44 1688.75,210.72 1686.66,210.36 1684.57,211.05 1682.48,210.81 1680.39,210.79 1678.29,210.53 1676.20,210.67 1674.11,210.92 1672.02,210.84 1669.92,210.95 1667.83,210.76 1665.74,210.41 1663.65,210.72 1661.55,210.94 1659.46,210.97 1657.37,210.68 1655.28,210.60 1653.18,210.36 1651.09,210.87 1649.00,210.74 1646.91,210.40 1644.82,210.88 1642.72,210.53 1640.63,210.54 1638.54,210.55 1636.45,210.39 1634.35,210.62 1632.26,210.43 1630.17,210.82 1628.08,210.71 1625.98,210.91 1623.89,210.88 1621.80,211.02 1619.71,210.89 1617.62,210.83 1615.52,210.34 1613.43,210.82 1611.34,210.41 1609.25,221.89 1607.15,237.85 1605.06,241.04 1602.97,241.04 1600.88,241.04 1598.78,241.04 1596.69,241.04 1594.60,241.04 1592.51,241.04 1590.41,241.04 1588.32,241.04 1586.23,241.04 1584.14,241.04 1582.05,241.04 1579.95,241.04 1577.86,241.04 1575.77,241.04 1573.68,241.04 1571.58,241.04 1569.49,241.04 1567.40,241.04 1565.31,241.04 1563.21,241.04 1561.12,241.04 1559.03,241.04 1556.94,241.04 1554.85,241.04 1552.75,241.04 1550.66,241.04 1548.57,241.04 1546.48,241.04 1544.38,241.04 1542.29,241.04 1540.20,241.04 1538.11,241.04 1536.01,241.04 1533.92,241.04 1531.83,241.04 1529.74,241.04 1527.64,241.04 1525.55,241.04 1523.46,241.04 1521.37,241.04 1519.28,241.04 1517.18,241.04 1515.09,241.04 1513.00,241.04 1510.91,241.04 1508.81,241.04 1506.72,241.04 1504.63,241.04 1502.54,241.04 1500.44,241.04 1498.35,241.04 1496.26,241.04 1494.17,241.04 1492.08,241.04 1489.98,241.04 1487.89,241.04 1485.80,241.04 1483.71,241.04 1481.61,241.04 1479.52,241.04 1477.43,241.04 1475.34,241.04 1473.24,241.04 1471.15,241.04 1469.06,241.04 1466.97,241.04 1464.87,241.04 1462.78,241.04 1460.69,241.04 1458.60,241.04 1456.51,241.04 1454.41,241.04 1452.32,241.04 1450.23,241.04 1448.14,241.04 1446.04,241.04 1443.95,241.04 1441.86,241.04 1439.77,241.04 1437.67,241.04 1435.58,241.04 1433.49,241.04 1431.40,241.04 1429.31,241.04 1427.21,241.04 1425.12,241.04 1423.03,241.04 1420.94,241.04 1418.84,241.04 1416.75,241.04 1414.66,241.04 1412.57,241.04 1410.47,241.04 1408.38,241.04 1406.29,241.04 1404.20,228.60 1402.10,213.04 1400.01,211.48 1397.92,211.75 1395.83,211.30 1393.74,211.18 1391.64,211.83 1389.55,211.31 1387.46,211.11 1385.37,211.56 1383.27,211.32 1381.18,211.29 1379.09,211.41 1377.00,211.63 1374.90,211.83 1372.81,211.79 1370.72,211.86 1368.63,211.71 1366.54,211.50 1364.44,211.86 1362.35,211.62 1360.26,211.67 1358.17,211.12 1356.07,211.66 1353.98,211.74 1351.89,211.64 1349.80,211.65 1347.70,211.20 1345.61,211.80 1343.52,211.67 1341.43,211.81 1339.33,211.82 1337.24,211.55 1335.15,211.32 1333.06,211.60 1330.97,211.34 1328.87,211.56 1326.78,211.48 1324.69,211.24 1322.60,211.15 1320.50,211.72 1318.41,211.30 1316.32,211.67 1314.23,211.60 1312.13,211.48 1310.04,211.28 1307.95,211.62 1305.86,211.82 1303.77,211.78 1301.67,211.46 1299.58,211.66 1297.49,211.44 1295.40,211.52 1293.30,211.81 1291.21,211.80 1289.12,211.38 1287.03,211.80 1284.93,211.34 1282.84,223.93 1280.75,239.49 1278.66,241.04 1276.56,241.04 1274.47,241.04 1272.38,241.04 1270.29,241.04 1268.20,241.04 1266.10,241.04 1264.01,241.04 1261.92,241.04 1259.83,241.04" fill="#EAB839" fill-opacity="0.1"/><polyline points="1259.83,203.40 1261.92,202.94 1264.01,203.03 1266.10,203.56 1268.20,203.66 1270.29,202.93 1272.38,203.26 1274.47,203.14 1276.56,203.72 1278.66,203.75 1280.75,201.23 1282.84,179.27 1284.93,161.63 1287.03,161.63 1289.12,161.32 1291.21,161.69 1293.30,161.70 1295.40,161.88 1297.49,161.27 1299.58,162.21 1301.67,161.92 1303.77,162.31 1305.86,162.31 1307.95,162.02 1310.04,161.69 1312.13,161.99 1314.23,162.26 1316.32,162.33 1318.41,161.48 1320.50,161.96 1322.60,161.73 1324.69,161.52 1326.78,161.40 1328.87,161.78 1330.97,161.12 1333.06,161.52 1335.15,161.42 1337.24,161.91 1339.33,162.38 1341.43,161.81 1343.52,162.19 1345.61,161.70 1347.70,161.26 1349.80,162.10 1351.89,161.89 1353.98,162.01 1356.07,161.46 1358.17,161.30 1360.26,161.47 1362.35,161.98 1364.44,162.19 1366.54,161.72 1368.63,161.92 1370.72,162.29 1372.81,162.10 1374.90,162.48 1377.00,162.09 1379.09,161.61 1381.18,161.37 1383.27,161.19 1385.37,161.94 1387.46,161.65 1389.55,161.40 1391.64,161.74 1393.74,161.29 1395.83,161.24 1397.92,161.95 1400.01,161.39 1402.10,163.90 1404.20,185.86 1406.29,203.04 1408.38,203.02 1410.47,203.25 1412.57,202.96 1414.66,203.16 1416.75,203.15 1418.84,203.59 1420.94,203.77 1423.03,203.68 1425.12,203.46 1427.21,203.70 1429.31,203.01 1431.40,203.27 1433.49,203.21 1435.58,203.21 1437.67,203.16 1439.77,203.34 1441.86,203.80 1443.95,203.05 1446.04,203.09 1448.14,203.33 1450.23,203.30 1452.32,203.18 1454.41,203.74 1456.51,203.10 1458.60,203.56 1460.69,203.73 1462.78,203.55 1464.87,203.11 1466.97,203.61 1469.06,203.10 1471.15,202.88 1473.24,203.33 1475.34,203.44 1477.43,203.35 1479.52,203.15 1481.61,203.08 1483.71,203.22 1485.80,203.19 1487.89,203.73 1489.98,203.66 1492.08,203.56 1494.17,203.10 1496.26,203.51 1498.35,203.26 1500.44,203.79 1502.54,203.75 1504.63,203.55 1506.72,203.17 1508.81,203.15 1510.91,203.16 1513.00,203.53 1515.09,203.31 1517.18,203.36 1519.28,203.36 1521.37,203.69 1523.46,202.96 1525.55,203.61 1527.64,202.87 1529.74,202.91 1531.83,203.79 1533.92,203.37 1536.01,203.03 1538.11,202.88 1540.20,203.38 1542.29,203.55 1544.38,203.60 1546.48,202.91 1548.57,203.60 1550.66,203.25 1552.75,203.67 1554.85,203.31 1556.94,202.90 1559.03,203.68 1561.12,203.02 1563.21,203.32 1565.31,202.96 1567.40,203.14 1569.49,203.58 1571.58,202.95 1573.68,203.34 1575.77,203.78 1577.86,203.80 1579.95,203.34 1582.05,203.38 1584.14,203.52 1586.23,203.67 1588.32,203.48 1590.41,203.50 1592.51,203.01 1594.60,203.80 1596.69,203.09 1598.78,203.01 1600.88,203.69 1602.97,202.92 1605.06,203.13 1607.15,198.63 1609.25,174.67 1611.34,157.79 1613.43,158.09 1615.52,157.44 1617.62,158.07 1619.71,158.48 1621.80,157.90 1623.89,157.67 1625.98,158.30 1628.08,158.17 1630.17,157.58 1632.26,157.32 1634.35,157.42 1636.45,157.52 1638.54,158.14 1640.63,157.77 1642.72,157.58 1644.82,158.47 1646.91,157.92 1649.00,158.06 1651.09,157.84 1653.18,157.76 1655.28,157.96 1657.37,157.95 1659.46,158.46 1661.55,157.75 1663.65,158.16 1665.74,157.14 1667.83,158.27 1669.92,158.51 1672.02,158.39 1674.11,158.32 1676.20,157.49 1678.29,157.79 1680.39,157.94 1682.48,158.14 1684.57,158.44 1686.66,157.89 1688.75,157.78 1690.85,157.88 1692.94,158.30 1695.03,158.03 1697.12,157.24 1699.22,158.05 1701.31,158.06 1703.40,157.62 1705.49,158.29 1707.59,157.59 1709.68,157.33 1711.77,162.69 1713.86,186.65 1715.95,202.88 1718.05,203.57 1720.14,203.70 1722.23,203.66 1724.32,203.31 1726.42,203.16 1728.51,202.91 1730.60,203.12 1732.69,203.19 1734.79,203.08 1736.88,203.37 1738.97,203.28 1741.06,203.77 1743.16,203.06" fill="none" stroke="#EAB839" stroke-width="1" stroke-opacity="1" stroke-linejoin="round"/><polyline points="1259.83,241.04 1261.92,241.04 1264.01,241.04 1266.10,241.04 1268.20,241.04 1270.29,241.04 1272.38,241.04 1274.47,241.04 1276.56,241.04 1278.66,241.04 1280.75,239.49 1282.84,223.93 1284.93,211.34 1287.03,211.80 1289.12,211.38 1291.21,211.80 1293.30,211.81 1295.40,211.52 1297.49,211.44 1299.58,211.66 1301.67,211.46 1303.77,211.78 1305.86,211.82 1307.95,211.62 1310.04,211.28 1312.13,211.48 1314.23,211.60 1316.32,211.67 1318.41,211.30 1320.50,211.72 1322.60,211.15 1324.69,211.24 1326.78,211.48 1328.87,211.56 1330.97,211.34 1333.06,211.60 1335.15,211.32 1337.24,211.55 1339.33,211.82 1341.43,211.81 1343.52,211.67 1345.61,211.80 1347.70,211.20 1349.80,211.65 1351.89,211.64 1353.98,211.74 1356.07,211.66 1358.17,211.12 1360.26,211.67 1362.35,211.62 1364.44,211.86 1366.54,211.50 1368.63,211.71 1370.72,211.86 1372.81,211.79 1374.90,211.83 1377.00,211.63 1379.09,211.41 1381.18,211.29 1383.27,211.32 1385.37,211.56 1387.46,211.11 1389.55,211.31 1391.64,211.83 1393.74,211.18 1395.83,211.30 1397.92,211.75 1400.01,211.48 1402.10,213.04 1404.20,228.60 1406.29,241.04 1408.38,241.04 1410.47,241.04 1412.57,241.04 1414.66,241.04 1416.75,241.04 1418.84,241.04 1420.94,241.04 1423.03,241.04 1425.12,241.04 1427.21,241.04 1429.31,241.04 1431.40,241.04 1433.49,241.04 1435.58,241.04 1437.67,241.04 1439.77,241.04 1441.86,241.04 1443.95,241.04 1446.04,241.04 1448.14,241.04 1450.23,241.04 1452.32,241.04 1454.41,241.04 1456.51,241.04 1458.60,241.04 1460.69,241.04 1462.78,241.04 1464.87,241.04 1466.97,241.04 1469.06,241.04 1471.15,241.04 1473.24,241.04 1475.34,241.04 1477.43,241.04 1479.52,241.04 1481.61,241.04 1483.71,241.04 1485.80,241.04 1487.89,241.04 1489.98,241.04 1492.08,241.04 1494.17,241.04 1496.26,241.04 1498.35,241.04 1500.44,241.04 1502.54,241.04 1504.63,241.04 1506.72,241.04 1508.81,241.04 1510.91,241.04 1513.00,241.04 1515.09,241.04 1517.18,241.04 1519.28,241.04 1521.37,241.04 1523.46,241.04 1525.55,241.04 1527.64,241.04 1529.74,241.04 1531.83,241.04 1533.92,241.04 1536.01,241.04 1538.11,241.04 1540.20,241.04 1542.29,241.04 1544.38,241.04 1546.48,241.04 1548.57,241.04 1550.66,241.04 1552.75,241.04 1554.85,241.04 1556.94,241.04 1559.03,241.04 1561.12,241.04 1563.21,241.04 1565.31,241.04 1567.40,241.04 1569.49,241.04 1571.58,241.04 1573.68,241.04 1575.77,241.04 1577.86,241.04 1579.95,241.04 1582.05,241.04 1584.14,241.04 1586.23,241.04 1588.32,241.04 1590.41,241.04 1592.51,241.04 1594.60,241.04 1596.69,241.04 1598.78,241.04 1600.88,241.04 1602.97,241.04 1605.06,241.04 1607.15,237.85 1609.25,221.89 1611.34,210.41 1613.43,210.82 1615.52,210.34 1617.62,210.83 1619.71,210.89 1621.80,211.02 1623.89,210.88 1625.98,210.91 1628.08,210.71 1630.17,210.82 1632.26,210.43 1634.35,210.62 1636.45,210.39 1638.54,210.55 1640.63,210.54 1642.72,210.53 1644.82,210.88 1646.91,210.40 1649.00,210.74 1651.09,210.87 1653.18,210.36 1655.28,210.60 1657.37,210.68 1659.46,210.97 1661.55,210.94 1663.65,210.72 1665.74,210.41 1667.83,210.76 1669.92,210.95 1672.02,210.84 1674.11,210.92 1676.20,210.67 1678.29,210.53 1680.39,210.79 1682.48,210.81 1684.57,211.05 1686.66,210.36 1688.75,210.72 1690.85,210.44 1692.94,210.89 1695.03,210.80 1697.12,210.38 1699.22,210.44 1701.31,211.08 1703.40,210.42 1705.49,210.65 1707.59,210.80 1709.68,210.47 1711.77,213.91 1713.86,229.87 1715.95,241.04 1718.05,241.04 1720.14,241.04 1722.23,241.04 1724.32,241.04 1726.42,241.04 1728.51,241.04 1730.60,241.04 1732.69,241.04 1734.79,241.04 1736.88,241.04 1738.97,241.04 1741.06,241.04 1743.16,241.04" fill="none" stroke="#7EB26D" stroke-width="1" stroke-opacity="1" stroke-linejoin="round"/><line x1="1244.0" y1="487.5" x2="1748.4" y2="487.5" stroke="rgba(204,206,220,0.245)" stroke-width="1"/><text x="1238.2" y="490.5" class="ax" text-anchor="end">0 kB/s</text><line x1="1244.0" y1="449.5" x2="1748.4" y2="449.5" stroke="rgba(204,206,220,0.245)" stroke-width="1"/><text x="1238.2" y="452.8" class="ax" text-anchor="end">1 MB/s</text><line x1="1244.0" y1="412.5" x2="1748.4" y2="412.5" stroke="rgba(204,206,220,0.245)" stroke-width="1"/><text x="1238.2" y="415.2" class="ax" text-anchor="end">2 MB/s</text><line x1="1244.0" y1="374.5" x2="1748.4" y2="374.5" stroke="rgba(204,206,220,0.245)" stroke-width="1"/><text x="1238.2" y="377.5" class="ax" text-anchor="end">3 MB/s</text><line x1="1245.5" y1="374.5" x2="1245.5" y2="487.5" stroke="rgba(204,206,220,0.245)" stroke-width="1"/><text x="1245.5" y="505.9" class="ax" text-anchor="middle">16:40</text><line x1="1310.5" y1="374.5" x2="1310.5" y2="487.5" stroke="rgba(204,206,220,0.245)" stroke-width="1"/><text x="1310.4" y="505.9" class="ax" text-anchor="middle">16:45</text><line x1="1375.5" y1="374.5" x2="1375.5" y2="487.5" stroke="rgba(204,206,220,0.245)" stroke-width="1"/><text x="1375.3" y="505.9" class="ax" text-anchor="middle">16:50</text><line x1="1440.5" y1="374.5" x2="1440.5" y2="487.5" stroke="rgba(204,206,220,0.245)" stroke-width="1"/><text x="1440.2" y="505.9" class="ax" text-anchor="middle">16:55</text><line x1="1505.5" y1="374.5" x2="1505.5" y2="487.5" stroke="rgba(204,206,220,0.245)" stroke-width="1"/><text x="1505.1" y="505.9" class="ax" text-anchor="middle">17:00</text><line x1="1570.5" y1="374.5" x2="1570.5" y2="487.5" stroke="rgba(204,206,220,0.245)" stroke-width="1"/><text x="1570.0" y="505.9" class="ax" text-anchor="middle">17:05</text><line x1="1634.5" y1="374.5" x2="1634.5" y2="487.5" stroke="rgba(204,206,220,0.245)" stroke-width="1"/><text x="1635.0" y="505.9" class="ax" text-anchor="middle">17:10</text><line x1="1699.5" y1="374.5" x2="1699.5" y2="487.5" stroke="rgba(204,206,220,0.245)" stroke-width="1"/><text x="1699.9" y="505.9" class="ax" text-anchor="middle">17:15</text><polygon points="1243.77,485.65 1245.97,484.62 1248.17,485.03 1250.37,485.54 1252.57,485.81 1254.77,485.62 1256.97,485.05 1259.17,484.95 1261.37,485.83 1264.00,486.00 1267.00,457.60 1269.75,473.56 1271.50,405.00 1275.15,477.20 1277.80,424.70 1281.50,477.66 1284.20,415.70 1287.95,476.10 1290.70,414.60 1294.50,474.79 1297.30,406.60 1301.00,477.81 1303.70,410.70 1307.45,473.08 1310.20,407.80 1314.00,475.41 1316.80,405.00 1320.45,476.69 1323.10,404.40 1326.90,480.67 1329.70,410.00 1333.50,478.16 1336.30,402.10 1340.10,480.07 1342.90,410.70 1346.55,476.80 1349.20,414.60 1352.95,474.88 1355.70,410.70 1359.40,474.98 1362.10,408.90 1366.00,480.68 1368.90,409.60 1372.55,478.64 1375.20,406.00 1379.00,475.46 1381.80,402.10 1385.45,473.17 1388.10,408.90 1391.90,476.99 1394.70,439.50 1398.00,470.00 1401.00,484.00 1403.00,480.00 1405.00,486.00 1407.00,485.19 1409.20,485.50 1411.40,485.69 1413.60,485.20 1415.80,484.89 1418.00,485.73 1420.20,485.96 1422.40,485.59 1424.60,485.50 1426.00,486.00 1428.80,482.00 1431.50,486.00 1434.00,485.18 1436.20,485.76 1438.40,485.04 1440.60,485.11 1442.80,485.39 1445.00,485.75 1447.20,484.84 1449.40,485.63 1451.60,485.02 1453.80,485.72 1456.00,485.73 1458.20,485.09 1460.40,485.65 1462.60,484.86 1464.80,485.41 1467.00,485.78 1469.20,485.73 1471.40,485.50 1473.60,485.20 1475.80,484.86 1478.00,486.00 1480.00,483.50 1482.00,486.00 1484.00,485.82 1486.20,485.53 1488.40,485.74 1490.60,484.83 1492.80,485.83 1495.00,485.94 1497.20,485.93 1499.40,485.53 1501.60,484.92 1503.80,484.94 1506.00,485.12 1508.20,484.80 1510.40,484.88 1512.60,485.60 1514.80,485.78 1517.00,484.88 1519.20,485.10 1521.40,485.96 1523.60,485.20 1525.80,485.55 1528.00,485.55 1530.20,485.60 1532.40,485.80 1534.60,486.00 1536.80,485.66 1539.00,485.58 1541.20,484.85 1543.40,485.85 1545.60,484.84 1547.80,485.75 1550.00,485.57 1552.20,485.01 1554.40,485.01 1556.60,485.48 1558.80,485.94 1561.00,485.43 1563.20,485.55 1565.40,484.90 1567.60,485.77 1569.80,485.56 1572.00,484.92 1574.20,485.96 1576.40,485.51 1578.60,485.03 1580.80,485.08 1583.00,485.95 1585.20,485.96 1587.40,485.92 1589.60,484.90 1591.80,485.69 1594.00,485.10 1596.20,484.92 1598.40,485.59 1601.00,486.00 1604.50,472.00 1608.00,396.40 1611.90,455.90 1614.80,394.10 1618.45,468.24 1621.10,389.60 1624.90,462.11 1627.70,395.30 1631.35,455.72 1634.00,388.50 1637.90,463.90 1640.80,391.40 1644.45,456.70 1647.10,386.90 1650.90,455.96 1653.70,388.50 1657.40,451.07 1660.10,385.10 1663.85,464.60 1666.60,385.10 1670.25,467.50 1672.90,380.60 1676.70,462.41 1679.50,387.30 1683.25,467.98 1686.00,385.50 1689.80,451.44 1692.60,386.20 1696.25,455.21 1698.90,386.20 1702.80,459.55 1705.70,390.70 1709.40,468.22 1712.10,398.20 1714.50,480.00 1717.00,476.00 1719.00,481.00 1722.00,477.00 1725.00,485.00 1729.00,486.00 1731.00,485.55 1733.20,486.11 1735.40,486.25 1737.60,486.07 1739.80,486.01 1742.00,485.57 1744.20,486.32 1744.20,487.50 1243.77,487.50" fill="#EAB839" fill-opacity="0.1"/><polyline points="1243.77,485.65 1245.97,484.62 1248.17,485.03 1250.37,485.54 1252.57,485.81 1254.77,485.62 1256.97,485.05 1259.17,484.95 1261.37,485.83 1264.00,486.00 1267.00,457.60 1269.75,473.56 1271.50,405.00 1275.15,477.20 1277.80,424.70 1281.50,477.66 1284.20,415.70 1287.95,476.10 1290.70,414.60 1294.50,474.79 1297.30,406.60 1301.00,477.81 1303.70,410.70 1307.45,473.08 1310.20,407.80 1314.00,475.41 1316.80,405.00 1320.45,476.69 1323.10,404.40 1326.90,480.67 1329.70,410.00 1333.50,478.16 1336.30,402.10 1340.10,480.07 1342.90,410.70 1346.55,476.80 1349.20,414.60 1352.95,474.88 1355.70,410.70 1359.40,474.98 1362.10,408.90 1366.00,480.68 1368.90,409.60 1372.55,478.64 1375.20,406.00 1379.00,475.46 1381.80,402.10 1385.45,473.17 1388.10,408.90 1391.90,476.99 1394.70,439.50 1398.00,470.00 1401.00,484.00 1403.00,480.00 1405.00,486.00 1407.00,485.19 1409.20,485.50 1411.40,485.69 1413.60,485.20 1415.80,484.89 1418.00,485.73 1420.20,485.96 1422.40,485.59 1424.60,485.50 1426.00,486.00 1428.80,482.00 1431.50,486.00 1434.00,485.18 1436.20,485.76 1438.40,485.04 1440.60,485.11 1442.80,485.39 1445.00,485.75 1447.20,484.84 1449.40,485.63 1451.60,485.02 1453.80,485.72 1456.00,485.73 1458.20,485.09 1460.40,485.65 1462.60,484.86 1464.80,485.41 1467.00,485.78 1469.20,485.73 1471.40,485.50 1473.60,485.20 1475.80,484.86 1478.00,486.00 1480.00,483.50 1482.00,486.00 1484.00,485.82 1486.20,485.53 1488.40,485.74 1490.60,484.83 1492.80,485.83 1495.00,485.94 1497.20,485.93 1499.40,485.53 1501.60,484.92 1503.80,484.94 1506.00,485.12 1508.20,484.80 1510.40,484.88 1512.60,485.60 1514.80,485.78 1517.00,484.88 1519.20,485.10 1521.40,485.96 1523.60,485.20 1525.80,485.55 1528.00,485.55 1530.20,485.60 1532.40,485.80 1534.60,486.00 1536.80,485.66 1539.00,485.58 1541.20,484.85 1543.40,485.85 1545.60,484.84 1547.80,485.75 1550.00,485.57 1552.20,485.01 1554.40,485.01 1556.60,485.48 1558.80,485.94 1561.00,485.43 1563.20,485.55 1565.40,484.90 1567.60,485.77 1569.80,485.56 1572.00,484.92 1574.20,485.96 1576.40,485.51 1578.60,485.03 1580.80,485.08 1583.00,485.95 1585.20,485.96 1587.40,485.92 1589.60,484.90 1591.80,485.69 1594.00,485.10 1596.20,484.92 1598.40,485.59 1601.00,486.00 1604.50,472.00 1608.00,396.40 1611.90,455.90 1614.80,394.10 1618.45,468.24 1621.10,389.60 1624.90,462.11 1627.70,395.30 1631.35,455.72 1634.00,388.50 1637.90,463.90 1640.80,391.40 1644.45,456.70 1647.10,386.90 1650.90,455.96 1653.70,388.50 1657.40,451.07 1660.10,385.10 1663.85,464.60 1666.60,385.10 1670.25,467.50 1672.90,380.60 1676.70,462.41 1679.50,387.30 1683.25,467.98 1686.00,385.50 1689.80,451.44 1692.60,386.20 1696.25,455.21 1698.90,386.20 1702.80,459.55 1705.70,390.70 1709.40,468.22 1712.10,398.20 1714.50,480.00 1717.00,476.00 1719.00,481.00 1722.00,477.00 1725.00,485.00 1729.00,486.00 1731.00,485.55 1733.20,486.11 1735.40,486.25 1737.60,486.07 1739.80,486.01 1742.00,485.57 1744.20,486.32" fill="none" stroke="#EAB839" stroke-width="1" stroke-opacity="1" stroke-linejoin="round"/><polyline points="1243.77,487.50 1744.50,487.50" fill="none" stroke="#7EB26D" stroke-width="1" stroke-opacity="1" stroke-linejoin="round"/><line x1="660.0" y1="803.5" x2="1158.4" y2="803.5" stroke="rgba(204,206,220,0.245)" stroke-width="1"/><text x="654.3" y="806.4" class="ax" text-anchor="end">-100</text><line x1="660.0" y1="763.5" x2="1158.4" y2="763.5" stroke="rgba(204,206,220,0.245)" stroke-width="1"/><text x="654.3" y="766.1" class="ax" text-anchor="end">-75</text><line x1="660.0" y1="722.5" x2="1158.4" y2="722.5" stroke="rgba(204,206,220,0.245)" stroke-width="1"/><text x="654.3" y="725.8" class="ax" text-anchor="end">-50</text><line x1="660.0" y1="682.5" x2="1158.4" y2="682.5" stroke="rgba(204,206,220,0.245)" stroke-width="1"/><text x="654.3" y="685.5" class="ax" text-anchor="end">-25</text><line x1="660.0" y1="642.5" x2="1158.4" y2="642.5" stroke="rgba(204,206,220,0.245)" stroke-width="1"/><text x="654.3" y="645.2" class="ax" text-anchor="end">0</text><line x1="660.0" y1="601.5" x2="1158.4" y2="601.5" stroke="rgba(204,206,220,0.245)" stroke-width="1"/><text x="654.3" y="604.9" class="ax" text-anchor="end">25</text><line x1="661.5" y1="601.9" x2="661.5" y2="803.4" stroke="rgba(204,206,220,0.245)" stroke-width="1"/><text x="661.5" y="822.9" class="ax" text-anchor="middle">16:40</text><line x1="725.5" y1="601.9" x2="725.5" y2="803.4" stroke="rgba(204,206,220,0.245)" stroke-width="1"/><text x="725.6" y="822.9" class="ax" text-anchor="middle">16:45</text><line x1="789.5" y1="601.9" x2="789.5" y2="803.4" stroke="rgba(204,206,220,0.245)" stroke-width="1"/><text x="789.8" y="822.9" class="ax" text-anchor="middle">16:50</text><line x1="853.5" y1="601.9" x2="853.5" y2="803.4" stroke="rgba(204,206,220,0.245)" stroke-width="1"/><text x="853.9" y="822.9" class="ax" text-anchor="middle">16:55</text><line x1="918.5" y1="601.9" x2="918.5" y2="803.4" stroke="rgba(204,206,220,0.245)" stroke-width="1"/><text x="918.1" y="822.9" class="ax" text-anchor="middle">17:00</text><line x1="982.5" y1="601.9" x2="982.5" y2="803.4" stroke="rgba(204,206,220,0.245)" stroke-width="1"/><text x="982.2" y="822.9" class="ax" text-anchor="middle">17:05</text><line x1="1046.5" y1="601.9" x2="1046.5" y2="803.4" stroke="rgba(204,206,220,0.245)" stroke-width="1"/><text x="1046.3" y="822.9" class="ax" text-anchor="middle">17:10</text><line x1="1110.5" y1="601.9" x2="1110.5" y2="803.4" stroke="rgba(204,206,220,0.245)" stroke-width="1"/><text x="1110.5" y="822.9" class="ax" text-anchor="middle">17:15</text><text x="622.5" y="710" class="ax" style="font-size:12.5px" text-anchor="middle" transform="rotate(-90 622.5 710)">ops/s</text><polygon points="679.50,642.20 680.70,671.22 681.00,674.42 683.14,679.50 685.28,678.97 687.42,677.46 689.56,674.92 691.70,680.49 693.84,680.64 695.98,677.78 698.12,677.71 700.26,675.11 702.40,672.86 704.54,676.42 706.68,678.49 708.82,673.50 710.96,680.51 713.10,675.07 715.24,675.08 717.38,673.24 719.52,682.48 721.66,679.97 723.80,681.29 725.94,678.78 728.08,673.16 730.22,676.01 732.36,677.64 734.50,673.95 736.64,682.04 738.78,676.39 740.92,674.33 743.06,680.73 745.20,674.04 747.34,681.80 749.48,677.21 751.62,678.17 753.76,676.14 755.90,677.52 758.04,674.64 760.18,673.19 762.32,681.20 764.46,675.10 766.60,680.37 768.74,674.85 770.88,682.20 773.02,681.47 775.16,680.13 777.30,680.21 779.44,678.45 781.58,679.89 783.72,674.01 785.86,677.44 788.00,680.83 790.14,674.77 792.28,681.76 794.42,681.41 796.56,676.79 798.70,676.36 800.84,677.19 802.98,676.56 805.12,682.45 807.26,676.57 809.40,673.09 811.54,673.73 812.20,671.22 813.00,642.20" fill="#8c9686" fill-opacity="0.42"/><polygon points="680.70,671.22 680.00,717.35 683.20,696.92 685.30,713.05 688.50,690.45 692.70,714.10 695.90,693.76 698.80,707.75 702.00,691.96 705.00,714.22 708.20,692.14 711.60,706.95 714.80,686.31 717.80,710.19 721.00,696.07 724.80,710.16 728.00,691.81 730.70,709.39 733.90,685.44 737.60,704.73 740.80,694.61 743.70,718.49 746.90,688.95 749.80,716.67 753.00,692.83 756.50,720.84 759.70,696.47 762.60,711.33 765.80,696.87 769.50,722.05 772.70,691.73 775.80,720.54 779.00,690.44 782.10,710.72 785.30,687.30 788.60,720.40 791.80,686.20 794.70,704.80 797.90,694.50 801.60,718.43 804.80,690.34 807.90,719.65 811.10,684.78 812.20,671.22" fill="#8c9686" fill-opacity="0.22"/><polygon points="678.20,666.38 680.90,678.01 682.20,678.01 684.60,666.38" fill="#8f998a" fill-opacity="0.48"/><polygon points="680.40,669.60 683.10,673.33 683.80,673.33 685.60,669.60" fill="#a7ae9f" fill-opacity="0.28"/><polygon points="683.50,666.38 686.20,751.10 687.50,751.10 689.90,666.38" fill="#8f998a" fill-opacity="0.48"/><polygon points="685.70,669.60 688.40,730.79 689.10,730.79 690.90,669.60" fill="#a7ae9f" fill-opacity="0.28"/><polygon points="690.90,666.38 693.60,726.81 694.90,726.81 697.30,666.38" fill="#8f998a" fill-opacity="0.48"/><polygon points="693.10,669.60 695.80,719.34 696.50,719.34 698.30,669.60" fill="#a7ae9f" fill-opacity="0.28"/><polygon points="697.00,666.38 699.70,751.75 701.00,751.75 703.40,666.38" fill="#8f998a" fill-opacity="0.48"/><polygon points="699.20,669.60 701.90,747.41 702.60,747.41 704.40,669.60" fill="#a7ae9f" fill-opacity="0.28"/><polygon points="703.20,666.38 705.90,753.84 707.20,753.84 709.60,666.38" fill="#8f998a" fill-opacity="0.48"/><polygon points="705.40,669.60 708.10,737.34 708.80,737.34 710.60,669.60" fill="#a7ae9f" fill-opacity="0.28"/><polygon points="709.80,666.38 712.50,755.26 713.80,755.26 716.20,666.38" fill="#8f998a" fill-opacity="0.48"/><polygon points="712.00,669.60 714.70,761.87 715.40,761.87 717.20,669.60" fill="#a7ae9f" fill-opacity="0.28"/><polygon points="716.00,666.38 718.70,751.50 720.00,751.50 722.40,666.38" fill="#8f998a" fill-opacity="0.48"/><polygon points="718.20,669.60 720.90,746.01 721.60,746.01 723.40,669.60" fill="#a7ae9f" fill-opacity="0.28"/><polygon points="723.00,666.38 725.70,745.48 727.00,745.48 729.40,666.38" fill="#8f998a" fill-opacity="0.48"/><polygon points="725.20,669.60 727.90,733.24 728.60,733.24 730.40,669.60" fill="#a7ae9f" fill-opacity="0.28"/><polygon points="728.90,666.38 731.60,766.46 732.90,766.46 735.30,666.38" fill="#8f998a" fill-opacity="0.48"/><polygon points="731.10,669.60 733.80,756.66 734.50,756.66 736.30,669.60" fill="#a7ae9f" fill-opacity="0.28"/><polygon points="735.80,666.38 738.50,768.87 739.80,768.87 742.20,666.38" fill="#8f998a" fill-opacity="0.48"/><polygon points="738.00,669.60 740.70,751.86 741.40,751.86 743.20,669.60" fill="#a7ae9f" fill-opacity="0.28"/><polygon points="741.90,666.38 744.60,757.11 745.90,757.11 748.30,666.38" fill="#8f998a" fill-opacity="0.48"/><polygon points="744.10,669.60 746.80,748.48 747.50,748.48 749.30,669.60" fill="#a7ae9f" fill-opacity="0.28"/><polygon points="748.00,666.38 750.70,776.12 752.00,776.12 754.40,666.38" fill="#8f998a" fill-opacity="0.48"/><polygon points="750.20,669.60 752.90,748.66 753.60,748.66 755.40,669.60" fill="#a7ae9f" fill-opacity="0.28"/><polygon points="754.70,666.38 757.40,759.15 758.70,759.15 761.10,666.38" fill="#8f998a" fill-opacity="0.48"/><polygon points="756.90,669.60 759.60,738.89 760.30,738.89 762.10,669.60" fill="#a7ae9f" fill-opacity="0.28"/><polygon points="760.80,666.38 763.50,755.79 764.80,755.79 767.20,666.38" fill="#8f998a" fill-opacity="0.48"/><polygon points="763.00,669.60 765.70,724.87 766.40,724.87 768.20,669.60" fill="#a7ae9f" fill-opacity="0.28"/><polygon points="767.70,666.38 770.40,765.07 771.70,765.07 774.10,666.38" fill="#8f998a" fill-opacity="0.48"/><polygon points="769.90,669.60 772.60,763.23 773.30,763.23 775.10,669.60" fill="#a7ae9f" fill-opacity="0.28"/><polygon points="774.00,666.38 776.70,753.65 778.00,753.65 780.40,666.38" fill="#8f998a" fill-opacity="0.48"/><polygon points="776.20,669.60 778.90,752.98 779.60,752.98 781.40,669.60" fill="#a7ae9f" fill-opacity="0.28"/><polygon points="780.30,666.38 783.00,761.22 784.30,761.22 786.70,666.38" fill="#8f998a" fill-opacity="0.48"/><polygon points="782.50,669.60 785.20,756.99 785.90,756.99 787.70,669.60" fill="#a7ae9f" fill-opacity="0.28"/><polygon points="786.80,666.38 789.50,767.65 790.80,767.65 793.20,666.38" fill="#8f998a" fill-opacity="0.48"/><polygon points="789.00,669.60 791.70,744.46 792.40,744.46 794.20,669.60" fill="#a7ae9f" fill-opacity="0.28"/><polygon points="792.90,666.38 795.60,769.94 796.90,769.94 799.30,666.38" fill="#8f998a" fill-opacity="0.48"/><polygon points="795.10,669.60 797.80,773.98 798.50,773.98 800.30,669.60" fill="#a7ae9f" fill-opacity="0.28"/><polygon points="799.80,666.38 802.50,769.33 803.80,769.33 806.20,666.38" fill="#8f998a" fill-opacity="0.48"/><polygon points="802.00,669.60 804.70,736.78 805.40,736.78 807.20,669.60" fill="#a7ae9f" fill-opacity="0.28"/><polygon points="806.10,666.38 808.80,713.25 810.10,713.25 812.50,666.38" fill="#8f998a" fill-opacity="0.48"/><polygon points="808.30,669.60 811.00,701.68 811.70,701.68 813.50,669.60" fill="#a7ae9f" fill-opacity="0.28"/><polyline points="679.60,658.32 681.00,682.50 681.80,667.99" fill="none" stroke="#5a9049" stroke-width="0.9" stroke-opacity="0.8" stroke-linejoin="round"/><polyline points="684.90,658.32 686.30,761.49 687.10,667.99" fill="none" stroke="#5a9049" stroke-width="0.9" stroke-opacity="0.8" stroke-linejoin="round"/><polyline points="692.30,658.32 693.70,740.53 694.50,667.99" fill="none" stroke="#5a9049" stroke-width="0.9" stroke-opacity="0.8" stroke-linejoin="round"/><polyline points="698.40,658.32 699.80,753.43 700.60,667.99" fill="none" stroke="#5a9049" stroke-width="0.9" stroke-opacity="0.8" stroke-linejoin="round"/><polyline points="704.60,658.32 706.00,758.26 706.80,667.99" fill="none" stroke="#5a9049" stroke-width="0.9" stroke-opacity="0.8" stroke-linejoin="round"/><polyline points="711.20,658.32 712.60,769.55 713.40,667.99" fill="none" stroke="#5a9049" stroke-width="0.9" stroke-opacity="0.8" stroke-linejoin="round"/><polyline points="717.40,658.32 718.80,759.88 719.60,667.99" fill="none" stroke="#5a9049" stroke-width="0.9" stroke-opacity="0.8" stroke-linejoin="round"/><polyline points="724.40,658.32 725.80,763.10 726.60,667.99" fill="none" stroke="#5a9049" stroke-width="0.9" stroke-opacity="0.8" stroke-linejoin="round"/><polyline points="730.30,658.32 731.70,769.55 732.50,667.99" fill="none" stroke="#5a9049" stroke-width="0.9" stroke-opacity="0.8" stroke-linejoin="round"/><polyline points="737.20,658.32 738.60,771.16 739.40,667.99" fill="none" stroke="#5a9049" stroke-width="0.9" stroke-opacity="0.8" stroke-linejoin="round"/><polyline points="743.30,658.32 744.70,767.94 745.50,667.99" fill="none" stroke="#5a9049" stroke-width="0.9" stroke-opacity="0.8" stroke-linejoin="round"/><polyline points="749.40,658.32 750.80,779.22 751.60,667.99" fill="none" stroke="#5a9049" stroke-width="0.9" stroke-opacity="0.8" stroke-linejoin="round"/><polyline points="756.10,658.32 757.50,767.94 758.30,667.99" fill="none" stroke="#5a9049" stroke-width="0.9" stroke-opacity="0.8" stroke-linejoin="round"/><polyline points="762.20,658.32 763.60,759.88 764.40,667.99" fill="none" stroke="#5a9049" stroke-width="0.9" stroke-opacity="0.8" stroke-linejoin="round"/><polyline points="769.10,658.32 770.50,771.16 771.30,667.99" fill="none" stroke="#5a9049" stroke-width="0.9" stroke-opacity="0.8" stroke-linejoin="round"/><polyline points="775.40,658.32 776.80,772.77 777.60,667.99" fill="none" stroke="#5a9049" stroke-width="0.9" stroke-opacity="0.8" stroke-linejoin="round"/><polyline points="781.70,658.32 783.10,767.94 783.90,667.99" fill="none" stroke="#5a9049" stroke-width="0.9" stroke-opacity="0.8" stroke-linejoin="round"/><polyline points="788.20,658.32 789.60,776.00 790.40,667.99" fill="none" stroke="#5a9049" stroke-width="0.9" stroke-opacity="0.8" stroke-linejoin="round"/><polyline points="794.30,658.32 795.70,782.44 796.50,667.99" fill="none" stroke="#5a9049" stroke-width="0.9" stroke-opacity="0.8" stroke-linejoin="round"/><polyline points="801.20,658.32 802.60,771.16 803.40,667.99" fill="none" stroke="#5a9049" stroke-width="0.9" stroke-opacity="0.8" stroke-linejoin="round"/><polyline points="807.50,658.32 808.90,724.41 809.70,667.99" fill="none" stroke="#5a9049" stroke-width="0.9" stroke-opacity="0.8" stroke-linejoin="round"/><polyline points="679.50,642.20 679.60,645.55 682.80,675.67 684.90,646.11 688.10,672.29 692.30,648.59 695.50,678.26 698.40,648.03 701.60,676.66 704.60,647.81 707.80,677.51 711.20,646.23 714.40,677.79 717.40,647.25 720.60,673.55 724.40,648.08 727.60,678.90 730.30,648.86 733.50,672.23 737.20,649.17 740.40,672.90 743.30,645.46 746.50,675.54 749.40,645.73 752.60,673.12 756.10,646.27 759.30,673.54 762.20,646.65 765.40,673.66 769.10,646.94 772.30,678.94 775.40,647.30 778.60,676.78 781.70,649.78 784.90,676.90 788.20,647.86 791.40,674.85 794.30,650.01 797.50,678.48 801.20,648.33 804.40,675.18 807.50,648.98 810.70,671.48 813.00,642.20" fill="none" stroke="#E5A8E2" stroke-width="1.4" stroke-opacity="1" stroke-linejoin="round"/><polygon points="1015.50,642.20 1016.70,671.22 1017.00,682.10 1019.14,674.19 1021.28,673.06 1023.42,682.49 1025.56,674.61 1027.70,673.99 1029.84,679.13 1031.98,676.17 1034.12,681.43 1036.26,675.07 1038.40,682.11 1040.54,675.92 1042.68,678.64 1044.82,681.84 1046.96,679.46 1049.10,681.76 1051.24,679.68 1053.38,673.30 1055.52,681.35 1057.66,678.53 1059.80,675.83 1061.94,674.67 1064.08,681.05 1066.22,678.47 1068.36,681.90 1070.50,680.31 1072.64,682.12 1074.78,678.31 1076.92,679.58 1079.06,678.75 1081.20,675.33 1083.34,682.08 1085.48,675.85 1087.62,680.38 1089.76,682.06 1091.90,679.12 1094.04,674.20 1096.18,680.81 1098.32,679.28 1100.46,674.62 1102.60,673.30 1104.74,677.97 1106.88,673.14 1109.02,681.78 1111.16,677.72 1113.30,677.83 1115.44,676.79 1117.58,679.22 1119.72,681.69 1121.86,675.80 1124.00,676.44 1125.20,671.22 1126.00,642.20" fill="#8c9686" fill-opacity="0.42"/><polygon points="1016.70,671.22 1016.30,714.73 1019.50,687.95 1019.50,714.98 1022.70,691.12 1026.00,711.84 1029.20,692.79 1032.40,713.67 1035.60,685.25 1038.80,722.73 1042.00,688.70 1045.30,711.81 1048.50,689.31 1051.70,721.44 1054.90,696.39 1058.10,713.36 1061.30,689.28 1064.50,705.32 1067.70,695.66 1071.00,706.77 1074.20,691.16 1077.40,710.21 1080.60,688.35 1083.80,710.37 1087.00,686.58 1090.30,704.17 1093.50,691.02 1096.70,718.85 1099.90,692.46 1103.10,707.35 1106.30,693.06 1109.60,704.46 1112.80,689.41 1116.00,719.47 1119.20,695.99 1121.90,712.37 1125.10,695.03 1125.20,671.22" fill="#8c9686" fill-opacity="0.22"/><polygon points="1014.50,666.38 1017.20,660.09 1018.50,660.09 1020.90,666.38" fill="#8f998a" fill-opacity="0.48"/><polygon points="1016.70,669.60 1019.40,658.27 1020.10,658.27 1021.90,669.60" fill="#a7ae9f" fill-opacity="0.28"/><polygon points="1017.70,666.38 1020.40,770.68 1021.70,770.68 1024.10,666.38" fill="#8f998a" fill-opacity="0.48"/><polygon points="1019.90,669.60 1022.60,772.07 1023.30,772.07 1025.10,669.60" fill="#a7ae9f" fill-opacity="0.28"/><polygon points="1024.20,666.38 1026.90,772.40 1028.20,772.40 1030.60,666.38" fill="#8f998a" fill-opacity="0.48"/><polygon points="1026.40,669.60 1029.10,753.00 1029.80,753.00 1031.60,669.60" fill="#a7ae9f" fill-opacity="0.28"/><polygon points="1030.60,666.38 1033.30,779.03 1034.60,779.03 1037.00,666.38" fill="#8f998a" fill-opacity="0.48"/><polygon points="1032.80,669.60 1035.50,765.01 1036.20,765.01 1038.00,669.60" fill="#a7ae9f" fill-opacity="0.28"/><polygon points="1037.00,666.38 1039.70,759.68 1041.00,759.68 1043.40,666.38" fill="#8f998a" fill-opacity="0.48"/><polygon points="1039.20,669.60 1041.90,758.76 1042.60,758.76 1044.40,669.60" fill="#a7ae9f" fill-opacity="0.28"/><polygon points="1043.50,666.38 1046.20,778.03 1047.50,778.03 1049.90,666.38" fill="#8f998a" fill-opacity="0.48"/><polygon points="1045.70,669.60 1048.40,761.15 1049.10,761.15 1050.90,669.60" fill="#a7ae9f" fill-opacity="0.28"/><polygon points="1049.90,666.38 1052.60,770.53 1053.90,770.53 1056.30,666.38" fill="#8f998a" fill-opacity="0.48"/><polygon points="1052.10,669.60 1054.80,733.40 1055.50,733.40 1057.30,669.60" fill="#a7ae9f" fill-opacity="0.28"/><polygon points="1056.30,666.38 1059.00,769.69 1060.30,769.69 1062.70,666.38" fill="#8f998a" fill-opacity="0.48"/><polygon points="1058.50,669.60 1061.20,760.54 1061.90,760.54 1063.70,669.60" fill="#a7ae9f" fill-opacity="0.28"/><polygon points="1062.70,666.38 1065.40,769.01 1066.70,769.01 1069.10,666.38" fill="#8f998a" fill-opacity="0.48"/><polygon points="1064.90,669.60 1067.60,746.74 1068.30,746.74 1070.10,669.60" fill="#a7ae9f" fill-opacity="0.28"/><polygon points="1069.20,666.38 1071.90,772.12 1073.20,772.12 1075.60,666.38" fill="#8f998a" fill-opacity="0.48"/><polygon points="1071.40,669.60 1074.10,752.34 1074.80,752.34 1076.60,669.60" fill="#a7ae9f" fill-opacity="0.28"/><polygon points="1075.60,666.38 1078.30,764.91 1079.60,764.91 1082.00,666.38" fill="#8f998a" fill-opacity="0.48"/><polygon points="1077.80,669.60 1080.50,740.12 1081.20,740.12 1083.00,669.60" fill="#a7ae9f" fill-opacity="0.28"/><polygon points="1082.00,666.38 1084.70,787.05 1086.00,787.05 1088.40,666.38" fill="#8f998a" fill-opacity="0.48"/><polygon points="1084.20,669.60 1086.90,756.91 1087.60,756.91 1089.40,669.60" fill="#a7ae9f" fill-opacity="0.28"/><polygon points="1088.50,666.38 1091.20,762.21 1092.50,762.21 1094.90,666.38" fill="#8f998a" fill-opacity="0.48"/><polygon points="1090.70,669.60 1093.40,746.50 1094.10,746.50 1095.90,669.60" fill="#a7ae9f" fill-opacity="0.28"/><polygon points="1094.90,666.38 1097.60,767.20 1098.90,767.20 1101.30,666.38" fill="#8f998a" fill-opacity="0.48"/><polygon points="1097.10,669.60 1099.80,771.18 1100.50,771.18 1102.30,669.60" fill="#a7ae9f" fill-opacity="0.28"/><polygon points="1101.30,666.38 1104.00,771.43 1105.30,771.43 1107.70,666.38" fill="#8f998a" fill-opacity="0.48"/><polygon points="1103.50,669.60 1106.20,755.52 1106.90,755.52 1108.70,669.60" fill="#a7ae9f" fill-opacity="0.28"/><polygon points="1107.80,666.38 1110.50,763.87 1111.80,763.87 1114.20,666.38" fill="#8f998a" fill-opacity="0.48"/><polygon points="1110.00,669.60 1112.70,757.24 1113.40,757.24 1115.20,669.60" fill="#a7ae9f" fill-opacity="0.28"/><polygon points="1114.20,666.38 1116.90,764.07 1118.20,764.07 1120.60,666.38" fill="#8f998a" fill-opacity="0.48"/><polygon points="1116.40,669.60 1119.10,750.92 1119.80,750.92 1121.60,669.60" fill="#a7ae9f" fill-opacity="0.28"/><polygon points="1120.10,666.38 1122.80,765.72 1124.10,765.72 1126.50,666.38" fill="#8f998a" fill-opacity="0.48"/><polygon points="1122.30,669.60 1125.00,762.00 1125.70,762.00 1127.50,669.60" fill="#a7ae9f" fill-opacity="0.28"/><polyline points="1015.90,658.32 1017.30,661.54 1018.10,667.99" fill="none" stroke="#5a9049" stroke-width="0.9" stroke-opacity="0.8" stroke-linejoin="round"/><polyline points="1019.10,658.32 1020.50,779.22 1021.30,667.99" fill="none" stroke="#5a9049" stroke-width="0.9" stroke-opacity="0.8" stroke-linejoin="round"/><polyline points="1025.60,658.32 1027.00,777.61 1027.80,667.99" fill="none" stroke="#5a9049" stroke-width="0.9" stroke-opacity="0.8" stroke-linejoin="round"/><polyline points="1032.00,658.32 1033.40,784.86 1034.20,667.99" fill="none" stroke="#5a9049" stroke-width="0.9" stroke-opacity="0.8" stroke-linejoin="round"/><polyline points="1038.40,658.32 1039.80,772.29 1040.60,667.99" fill="none" stroke="#5a9049" stroke-width="0.9" stroke-opacity="0.8" stroke-linejoin="round"/><polyline points="1044.90,658.32 1046.30,781.80 1047.10,667.99" fill="none" stroke="#5a9049" stroke-width="0.9" stroke-opacity="0.8" stroke-linejoin="round"/><polyline points="1051.30,658.32 1052.70,771.64 1053.50,667.99" fill="none" stroke="#5a9049" stroke-width="0.9" stroke-opacity="0.8" stroke-linejoin="round"/><polyline points="1057.70,658.32 1059.10,780.03 1059.90,667.99" fill="none" stroke="#5a9049" stroke-width="0.9" stroke-opacity="0.8" stroke-linejoin="round"/><polyline points="1064.10,658.32 1065.50,782.93 1066.30,667.99" fill="none" stroke="#5a9049" stroke-width="0.9" stroke-opacity="0.8" stroke-linejoin="round"/><polyline points="1070.60,658.32 1072.00,778.41 1072.80,667.99" fill="none" stroke="#5a9049" stroke-width="0.9" stroke-opacity="0.8" stroke-linejoin="round"/><polyline points="1077.00,658.32 1078.40,780.03 1079.20,667.99" fill="none" stroke="#5a9049" stroke-width="0.9" stroke-opacity="0.8" stroke-linejoin="round"/><polyline points="1083.40,658.32 1084.80,787.76 1085.60,667.99" fill="none" stroke="#5a9049" stroke-width="0.9" stroke-opacity="0.8" stroke-linejoin="round"/><polyline points="1089.90,658.32 1091.30,780.51 1092.10,667.99" fill="none" stroke="#5a9049" stroke-width="0.9" stroke-opacity="0.8" stroke-linejoin="round"/><polyline points="1096.30,658.32 1097.70,782.93 1098.50,667.99" fill="none" stroke="#5a9049" stroke-width="0.9" stroke-opacity="0.8" stroke-linejoin="round"/><polyline points="1102.70,658.32 1104.10,789.54 1104.90,667.99" fill="none" stroke="#5a9049" stroke-width="0.9" stroke-opacity="0.8" stroke-linejoin="round"/><polyline points="1109.20,658.32 1110.60,782.93 1111.40,667.99" fill="none" stroke="#5a9049" stroke-width="0.9" stroke-opacity="0.8" stroke-linejoin="round"/><polyline points="1115.60,658.32 1117.00,780.51 1117.80,667.99" fill="none" stroke="#5a9049" stroke-width="0.9" stroke-opacity="0.8" stroke-linejoin="round"/><polyline points="1121.50,658.32 1122.90,770.84 1123.70,667.99" fill="none" stroke="#5a9049" stroke-width="0.9" stroke-opacity="0.8" stroke-linejoin="round"/><polyline points="1015.50,642.20 1015.90,654.29 1019.10,677.36 1019.10,652.09 1022.30,670.82 1025.60,650.42 1028.80,676.03 1032.00,652.63 1035.20,674.58 1038.40,653.89 1041.60,671.88 1044.90,652.51 1048.10,675.66 1051.30,651.38 1054.50,675.52 1057.70,650.58 1060.90,672.30 1064.10,651.02 1067.30,670.50 1070.60,653.38 1073.80,677.21 1077.00,652.67 1080.20,672.80 1083.40,650.46 1086.60,673.74 1089.90,650.40 1093.10,671.49 1096.30,650.28 1099.50,672.57 1102.70,655.03 1105.90,670.84 1109.20,651.39 1112.40,673.36 1115.60,650.94 1118.80,674.91 1121.50,654.44 1124.70,671.07 1126.00,642.20" fill="none" stroke="#E5A8E2" stroke-width="1.4" stroke-opacity="1" stroke-linejoin="round"/><polygon points="813.00,642.20 815.00,645.42 818.00,643.81 822.00,644.62 826.00,643.01 830.00,642.20" fill="#a3ab9e" fill-opacity="0.35"/><polyline points="813.00,642.20 815.00,645.42 818.00,643.81 822.00,644.62 826.00,643.01 830.00,642.20" fill="none" stroke="#5a8a4e" stroke-width="1" stroke-opacity="0.9" stroke-linejoin="round"/><polygon points="842.00,642.20 844.00,647.04 846.00,648.65 848.00,645.42 851.00,642.20" fill="#a3ab9e" fill-opacity="0.35"/><polyline points="842.00,642.20 844.00,647.04 846.00,648.65 848.00,645.42 851.00,642.20" fill="none" stroke="#5a8a4e" stroke-width="1" stroke-opacity="0.9" stroke-linejoin="round"/><polygon points="1126.00,642.20 1128.00,648.65 1131.00,647.04 1133.00,653.48 1136.00,648.65 1139.00,643.81 1142.00,642.20" fill="#a3ab9e" fill-opacity="0.35"/><polyline points="1126.00,642.20 1128.00,648.65 1131.00,647.04 1133.00,653.48 1136.00,648.65 1139.00,643.81 1142.00,642.20" fill="none" stroke="#5a8a4e" stroke-width="1" stroke-opacity="0.9" stroke-linejoin="round"/><polyline points="659.79,642.20 1156.00,642.20" fill="none" stroke="#b3a6e0" stroke-width="1.6" stroke-opacity="1" stroke-linejoin="round"/><line x1="1234.0" y1="804.5" x2="1747.9" y2="804.5" stroke="rgba(204,206,220,0.245)" stroke-width="1"/><text x="1228.0" y="807.2" class="ax" text-anchor="end">0%</text><line x1="1234.0" y1="758.5" x2="1747.9" y2="758.5" stroke="rgba(204,206,220,0.245)" stroke-width="1"/><text x="1228.0" y="761.2" class="ax" text-anchor="end">25%</text><line x1="1234.0" y1="712.5" x2="1747.9" y2="712.5" stroke="rgba(204,206,220,0.245)" stroke-width="1"/><text x="1228.0" y="715.2" class="ax" text-anchor="end">50%</text><line x1="1234.0" y1="666.5" x2="1747.9" y2="666.5" stroke="rgba(204,206,220,0.245)" stroke-width="1"/><text x="1228.0" y="669.3" class="ax" text-anchor="end">75%</text><line x1="1234.0" y1="620.5" x2="1747.9" y2="620.5" stroke="rgba(204,206,220,0.245)" stroke-width="1"/><text x="1228.0" y="623.3" class="ax" text-anchor="end">100%</text><line x1="1235.5" y1="602.4" x2="1235.5" y2="804.2" stroke="rgba(204,206,220,0.245)" stroke-width="1"/><line x1="1301.5" y1="602.4" x2="1301.5" y2="804.2" stroke="rgba(204,206,220,0.245)" stroke-width="1"/><line x1="1367.5" y1="602.4" x2="1367.5" y2="804.2" stroke="rgba(204,206,220,0.245)" stroke-width="1"/><line x1="1433.5" y1="602.4" x2="1433.5" y2="804.2" stroke="rgba(204,206,220,0.245)" stroke-width="1"/><line x1="1500.5" y1="602.4" x2="1500.5" y2="804.2" stroke="rgba(204,206,220,0.245)" stroke-width="1"/><line x1="1566.5" y1="602.4" x2="1566.5" y2="804.2" stroke="rgba(204,206,220,0.245)" stroke-width="1"/><line x1="1632.5" y1="602.4" x2="1632.5" y2="804.2" stroke="rgba(204,206,220,0.245)" stroke-width="1"/><line x1="1698.5" y1="602.4" x2="1698.5" y2="804.2" stroke="rgba(204,206,220,0.245)" stroke-width="1"/><text x="1235.5" y="822.9" class="ax" text-anchor="middle">16:40</text><text x="1301.6" y="822.9" class="ax" text-anchor="middle">16:45</text><text x="1367.8" y="822.9" class="ax" text-anchor="middle">16:50</text><text x="1433.9" y="822.9" class="ax" text-anchor="middle">16:55</text><text x="1500.1" y="822.9" class="ax" text-anchor="middle">17:00</text><text x="1566.2" y="822.9" class="ax" text-anchor="middle">17:05</text><text x="1632.3" y="822.9" class="ax" text-anchor="middle">17:10</text><text x="1698.5" y="822.9" class="ax" text-anchor="middle">17:15</text><polyline points="1233.74,804.20 1744.50,804.20" fill="none" stroke="#c8562a" stroke-width="1.6" stroke-opacity="1" stroke-linejoin="round"/><polyline points="1254.50,803.83 1256.20,795.56 1257.90,803.65 1261.05,803.83 1261.05,803.83 1262.75,795.56 1264.45,803.65 1267.60,803.83 1267.60,803.83 1269.30,795.56 1271.00,803.65 1274.15,803.83 1274.15,803.83 1275.85,795.56 1277.55,803.65 1280.70,803.83 1280.70,803.83 1282.40,795.56 1284.10,803.65 1287.25,803.83 1287.25,803.83 1288.95,795.56 1290.65,803.65 1293.80,803.83 1293.80,803.83 1295.50,795.56 1297.20,803.65 1300.35,803.83 1300.35,803.83 1302.05,795.56 1303.75,803.65 1306.90,803.83 1306.90,803.83 1308.60,795.56 1310.30,803.65 1313.45,803.83 1313.45,803.83 1315.15,795.56 1316.85,803.65 1320.00,803.83 1320.00,803.83 1321.70,795.56 1323.40,803.65 1326.55,803.83 1326.55,803.83 1328.25,795.56 1329.95,803.65 1333.10,803.83 1333.10,803.83 1334.80,795.56 1336.50,803.65 1339.65,803.83 1339.65,803.83 1341.35,795.56 1343.05,803.65 1346.20,803.83 1346.20,803.83 1347.90,795.56 1349.60,803.65 1352.75,803.83 1352.75,803.83 1354.45,795.56 1356.15,803.65 1359.30,803.83 1359.30,803.83 1361.00,795.56 1362.70,803.65 1365.85,803.83 1365.85,803.83 1367.55,795.56 1369.25,803.65 1372.40,803.83 1372.40,803.83 1374.10,795.56 1375.80,803.65 1378.95,803.83 1378.95,803.83 1380.65,795.56 1382.35,803.65 1385.50,803.83 1385.50,803.83 1387.20,795.56 1388.90,803.65 1392.05,803.83" fill="none" stroke="#EF843C" stroke-width="1" stroke-opacity="1" stroke-linejoin="round"/><polyline points="1255.30,804.33 1257.00,796.06 1258.70,804.15 1261.85,804.33 1261.85,804.33 1263.55,796.06 1265.25,804.15 1268.40,804.33 1268.40,804.33 1270.10,796.06 1271.80,804.15 1274.95,804.33 1274.95,804.33 1276.65,796.06 1278.35,804.15 1281.50,804.33 1281.50,804.33 1283.20,796.06 1284.90,804.15 1288.05,804.33 1288.05,804.33 1289.75,796.06 1291.45,804.15 1294.60,804.33 1294.60,804.33 1296.30,796.06 1298.00,804.15 1301.15,804.33 1301.15,804.33 1302.85,796.06 1304.55,804.15 1307.70,804.33 1307.70,804.33 1309.40,796.06 1311.10,804.15 1314.25,804.33 1314.25,804.33 1315.95,796.06 1317.65,804.15 1320.80,804.33 1320.80,804.33 1322.50,796.06 1324.20,804.15 1327.35,804.33 1327.35,804.33 1329.05,796.06 1330.75,804.15 1333.90,804.33 1333.90,804.33 1335.60,796.06 1337.30,804.15 1340.45,804.33 1340.45,804.33 1342.15,796.06 1343.85,804.15 1347.00,804.33 1347.00,804.33 1348.70,796.06 1350.40,804.15 1353.55,804.33 1353.55,804.33 1355.25,796.06 1356.95,804.15 1360.10,804.33 1360.10,804.33 1361.80,796.06 1363.50,804.15 1366.65,804.33 1366.65,804.33 1368.35,796.06 1370.05,804.15 1373.20,804.33 1373.20,804.33 1374.90,796.06 1376.60,804.15 1379.75,804.33 1379.75,804.33 1381.45,796.06 1383.15,804.15 1386.30,804.33 1386.30,804.33 1388.00,796.06 1389.70,804.15 1392.85,804.33" fill="none" stroke="#EAB839" stroke-width="1" stroke-opacity="0.7" stroke-linejoin="round"/><polyline points="1602.50,803.83 1604.20,795.56 1605.90,803.65 1609.10,803.83 1609.10,803.83 1610.80,795.56 1612.50,803.65 1615.70,803.83 1615.70,803.83 1617.40,795.56 1619.10,803.65 1622.30,803.83 1622.30,803.83 1624.00,795.56 1625.70,803.65 1628.90,803.83 1628.90,803.83 1630.60,795.56 1632.30,803.65 1635.50,803.83 1635.50,803.83 1637.20,795.56 1638.90,803.65 1642.10,803.83 1642.10,803.83 1643.80,795.56 1645.50,803.65 1648.70,803.83 1648.70,803.83 1650.40,795.56 1652.10,803.65 1655.30,803.83 1655.30,803.83 1657.00,795.56 1658.70,803.65 1661.90,803.83 1661.90,803.83 1663.60,795.56 1665.30,803.65 1668.50,803.83 1668.50,803.83 1670.20,795.56 1671.90,803.65 1675.10,803.83 1675.10,803.83 1676.80,795.56 1678.50,803.65 1681.70,803.83 1681.70,803.83 1683.40,795.56 1685.10,803.65 1688.30,803.83 1688.30,803.83 1690.00,795.56 1691.70,803.65 1694.90,803.83 1694.90,803.83 1696.60,795.56 1698.30,803.65 1701.50,803.83 1701.50,803.83 1703.20,795.56 1704.90,803.65 1708.10,803.83 1708.10,803.83 1709.80,795.56 1711.50,803.65 1714.70,803.83" fill="none" stroke="#EF843C" stroke-width="1" stroke-opacity="1" stroke-linejoin="round"/><polyline points="1603.30,804.33 1605.00,796.06 1606.70,804.15 1609.90,804.33 1609.90,804.33 1611.60,796.06 1613.30,804.15 1616.50,804.33 1616.50,804.33 1618.20,796.06 1619.90,804.15 1623.10,804.33 1623.10,804.33 1624.80,796.06 1626.50,804.15 1629.70,804.33 1629.70,804.33 1631.40,796.06 1633.10,804.15 1636.30,804.33 1636.30,804.33 1638.00,796.06 1639.70,804.15 1642.90,804.33 1642.90,804.33 1644.60,796.06 1646.30,804.15 1649.50,804.33 1649.50,804.33 1651.20,796.06 1652.90,804.15 1656.10,804.33 1656.10,804.33 1657.80,796.06 1659.50,804.15 1662.70,804.33 1662.70,804.33 1664.40,796.06 1666.10,804.15 1669.30,804.33 1669.30,804.33 1671.00,796.06 1672.70,804.15 1675.90,804.33 1675.90,804.33 1677.60,796.06 1679.30,804.15 1682.50,804.33 1682.50,804.33 1684.20,796.06 1685.90,804.15 1689.10,804.33 1689.10,804.33 1690.80,796.06 1692.50,804.15 1695.70,804.33 1695.70,804.33 1697.40,796.06 1699.10,804.15 1702.30,804.33 1702.30,804.33 1704.00,796.06 1705.70,804.15 1708.90,804.33 1708.90,804.33 1710.60,796.06 1712.30,804.15 1715.50,804.33" fill="none" stroke="#EAB839" stroke-width="1" stroke-opacity="0.7" stroke-linejoin="round"/></svg>
</body></html>
